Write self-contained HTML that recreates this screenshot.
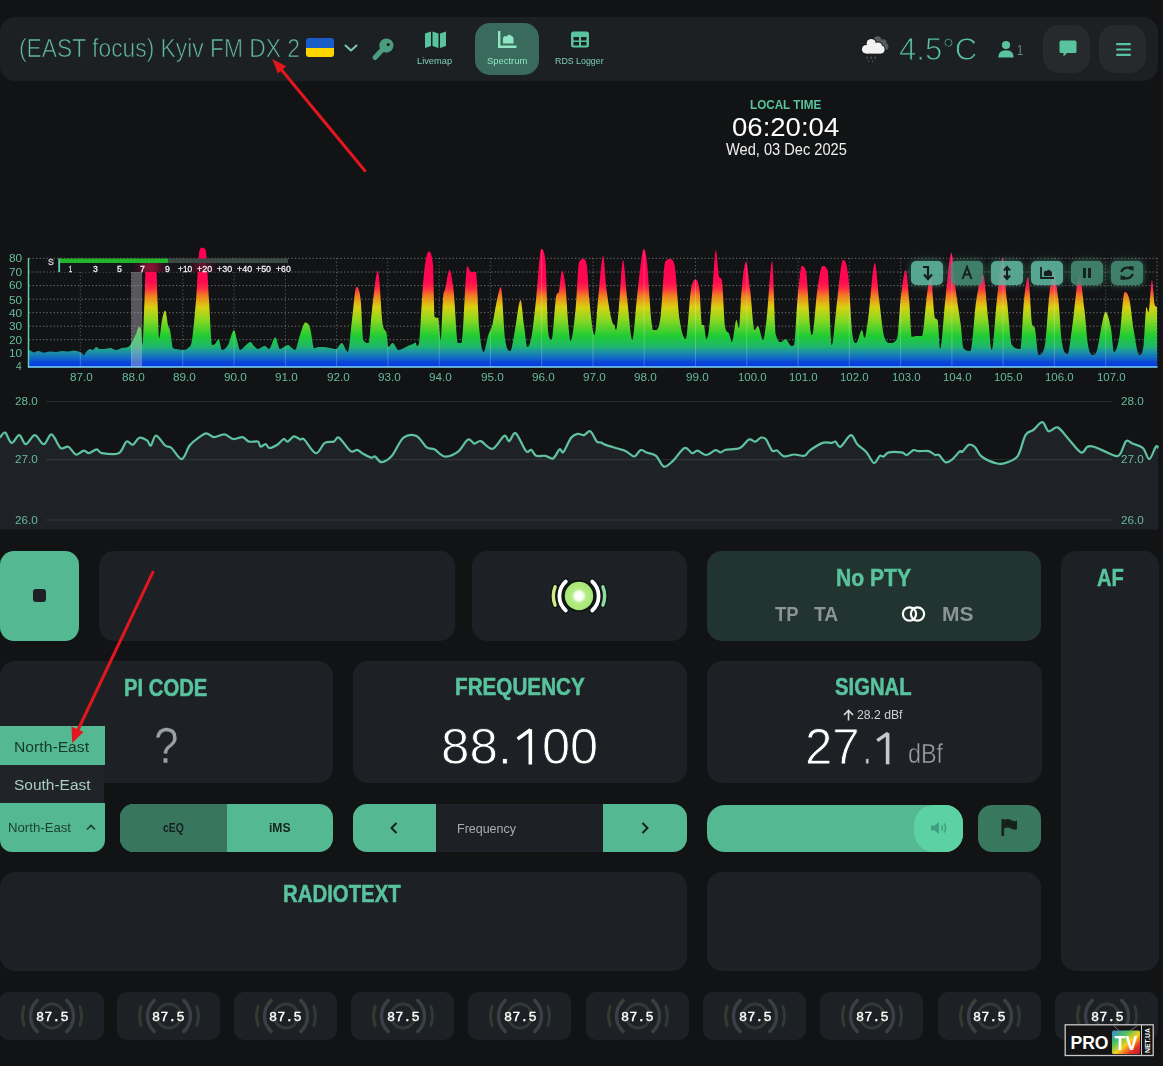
<!DOCTYPE html>
<html><head><meta charset="utf-8"><title>FM-DX Webserver</title>
<style>
html,body{margin:0;padding:0}
body{width:1163px;height:1066px;overflow:hidden;position:relative;background:#121315;font-family:"Liberation Sans",sans-serif}
.panel{position:absolute}
.t{position:absolute;white-space:nowrap;line-height:1;transform-origin:0 0;display:block}
.ic{position:absolute;overflow:visible}
</style></head><body>
<div class="panel" style="left:0;top:17px;width:1158px;height:64px;border-radius:15px;background:#1d2023"></div>
<span class="t" id="t0" style="left:18.9px;top:35.5px;font-size:25.7px;color:#62bb9c;font-weight:400;font-family:'Liberation Sans', sans-serif;transform:scaleX(0.8882);-webkit-text-stroke:0.7px #1d2023;">(EAST focus) Kyiv FM DX 2</span>
<div style="position:absolute;left:306px;top:38px;width:28px;height:19px;border-radius:3px;overflow:hidden"><div style="height:50%;background:#1a5dc8"></div><div style="height:50%;background:#ffd500"></div></div>
<svg class="ic" style="left:343px;top:42px" width="16" height="12" viewBox="0 0 16 12"><path d="M2.5 3.5 L8 8.5 L13.5 3.5" fill="none" stroke="#7cc9ae" stroke-width="2" stroke-linecap="round" stroke-linejoin="round"/></svg>
<svg class="ic" style="left:371px;top:38px" width="24" height="24" viewBox="0 0 24 24"><circle cx="15.4" cy="7.6" r="7.1" fill="#4c9c80"/><circle cx="17.2" cy="6.6" r="1.6" fill="#1d2023"/><path d="M11.5 11.5 L4 19.5" stroke="#4c9c80" stroke-width="5" stroke-linecap="round"/></svg>
<svg class="ic" style="left:425px;top:31px" width="21" height="17" viewBox="0 0 21 17"><path d="M0 2.5 L6 0.5 L6 15 L0 17 Z M7.5 0.5 L13.5 2.5 L13.5 17 L7.5 15 Z M15 2.5 L21 0.5 L21 15 L15 17 Z" fill="#58c39c"/></svg>
<span class="t" id="t1" style="left:417.4px;top:55.6px;font-size:9.8px;color:#7dcfb0;font-weight:400;font-family:'Liberation Sans', sans-serif;transform:scaleX(0.9473);">Livemap</span>
<div style="position:absolute;left:475px;top:23px;width:64px;height:52px;border-radius:15px;background:#3a6a5c"></div>
<svg class="ic" style="left:498px;top:31px" width="19" height="17" viewBox="0 0 19 17"><path d="M1.2 0 L1.2 15.8 L18.5 15.8" fill="none" stroke="#8ee6c4" stroke-width="2.4"/><path d="M5 12.5 L5 7 Q6 4 8.5 5.5 Q10.5 2.5 13 4.5 Q15 5 15.5 7.5 L15.5 12.5 Z" fill="#8ee6c4"/></svg>
<span class="t" id="t2" style="left:487.0px;top:55.6px;font-size:9.8px;color:#8ee6c4;font-weight:400;font-family:'Liberation Sans', sans-serif;transform:scaleX(0.9602);">Spectrum</span>
<svg class="ic" style="left:571px;top:31px" width="18" height="17" viewBox="0 0 18 17"><rect x="0" y="0.5" width="18" height="16" rx="2.5" fill="#58c39c"/><rect x="2.5" y="6" width="5.5" height="3.5" fill="#1d2023"/><rect x="10" y="6" width="5.5" height="3.5" fill="#1d2023"/><rect x="2.5" y="11" width="5.5" height="3.5" fill="#1d2023"/><rect x="10" y="11" width="5.5" height="3.5" fill="#1d2023"/></svg>
<span class="t" id="t3" style="left:554.7px;top:55.6px;font-size:9.8px;color:#7dcfb0;font-weight:400;font-family:'Liberation Sans', sans-serif;transform:scaleX(0.9021);">RDS Logger</span>
<svg class="ic" style="left:850px;top:28px" width="50" height="40" viewBox="0 0 50 40"><g fill="#5a5a5a"><circle cx="27.5" cy="12" r="3.8"/><circle cx="33" cy="14.8" r="3.6"/><circle cx="35.3" cy="18.8" r="3.2"/><rect x="26" y="14" width="9" height="8"/></g><g fill="none" stroke="#141618" stroke-width="2.2"><circle cx="16.2" cy="21.3" r="4.3"/><circle cx="21.2" cy="15.6" r="4.6"/><circle cx="28" cy="18.6" r="4"/><circle cx="30.6" cy="21.6" r="4"/></g><g fill="#f2f2f2"><circle cx="16.2" cy="21.3" r="4.3"/><circle cx="21.2" cy="15.6" r="4.6"/><circle cx="28" cy="18.6" r="4"/><circle cx="30.6" cy="21.6" r="4"/><rect x="16.2" y="19" width="14.4" height="6.6"/></g><path d="M17.5 28.5 L16.8 31 M21.5 28.5 L20.8 31 M25.5 28.5 L24.8 31 M19 32.5 L18.5 34 M23 32.5 L22.5 34" stroke="#4a4e52" stroke-width="1.2"/></svg>
<span class="t" id="t4" style="left:898.7px;top:33.0px;font-size:32px;color:#58c39c;font-weight:400;font-family:'Liberation Sans', sans-serif;transform:scaleX(0.9750);-webkit-text-stroke:1.0px #1d2023;">4.5°C</span>
<svg class="ic" style="left:997px;top:39px" width="20" height="19" viewBox="0 0 20 19"><circle cx="9" cy="6" r="4.1" fill="#58c39c"/><path d="M1.3 18.5 Q1.3 11.3 9 11.3 Q16.7 11.3 16.7 18.5 Z" fill="#58c39c"/></svg>
<span class="t" id="t5" style="left:1017.2px;top:42.9px;font-size:14.5px;color:#78b09b;font-weight:400;font-family:'Liberation Sans', sans-serif;transform:scaleX(0.7571);-webkit-text-stroke:0.3px #1d2023;">1</span>
<div style="position:absolute;left:1043px;top:25px;width:47px;height:48px;border-radius:16px;background:#262a2d"></div>
<svg class="ic" style="left:1059px;top:40px" width="18" height="18" viewBox="0 0 18 18"><path d="M2 0.5 H16 Q17.5 0.5 17.5 2 V11.5 Q17.5 13 16 13 H8 L4.5 16.5 V13 H2 Q0.5 13 0.5 11.5 V2 Q0.5 0.5 2 0.5 Z" fill="#58c39c"/></svg>
<div style="position:absolute;left:1099px;top:25px;width:47px;height:48px;border-radius:16px;background:#262a2d"></div>
<svg class="ic" style="left:1115.5px;top:43px" width="15" height="13" viewBox="0 0 15 13"><rect x="0" y="0" width="15" height="2.2" rx="1" fill="#58c39c"/><rect x="0" y="5.4" width="15" height="2.2" rx="1" fill="#58c39c"/><rect x="0" y="10.8" width="15" height="2.2" rx="1" fill="#58c39c"/></svg>
<span class="t" id="t6" style="left:750.0px;top:98.4px;font-size:13.4px;color:#58c39c;font-weight:700;font-family:'Liberation Sans', sans-serif;transform:scaleX(0.8731);">LOCAL TIME</span>
<span class="t" id="t7" style="left:731.9px;top:114.9px;font-size:25.8px;color:#ffffff;font-weight:400;font-family:'Liberation Sans', sans-serif;transform:scaleX(1.0679);">06:20:04</span>
<span class="t" id="t8" style="left:726.0px;top:142.4px;font-size:16.8px;color:#f0f0f0;font-weight:400;font-family:'Liberation Sans', sans-serif;transform:scaleX(0.8709);">Wed, 03 Dec 2025</span>
<svg class="ic" style="left:0;top:240px" width="1163" height="150" viewBox="0 240 1163 150"><defs><linearGradient id="sg" gradientUnits="userSpaceOnUse" x1="0" y1="367" x2="0" y2="250"><stop offset="0" stop-color="#0838e8"/><stop offset="0.043" stop-color="#0a48d8"/><stop offset="0.085" stop-color="#1470c0"/><stop offset="0.137" stop-color="#1c98a0"/><stop offset="0.179" stop-color="#20b868"/><stop offset="0.265" stop-color="#20cc34"/><stop offset="0.41" stop-color="#90d820"/><stop offset="0.513" stop-color="#d8d010"/><stop offset="0.607" stop-color="#f08020"/><stop offset="0.667" stop-color="#ff3040"/><stop offset="0.726" stop-color="#ff0a50"/><stop offset="1" stop-color="#ff0050"/></linearGradient><clipPath id="rowclip"><rect x="59" y="263" width="229" height="9"/></clipPath><filter id="blr" x="-50%" y="-50%" width="200%" height="200%"><feGaussianBlur stdDeviation="6"/></filter><filter id="glow" x="-50%" y="-50%" width="200%" height="200%"><feGaussianBlur stdDeviation="3"/></filter></defs><line x1="29" y1="258.3" x2="1157" y2="258.3" stroke="rgba(210,210,210,0.5)" stroke-width="1" stroke-dasharray="1.3 2.2"/><line x1="29" y1="272.0" x2="1157" y2="272.0" stroke="rgba(210,210,210,0.5)" stroke-width="1" stroke-dasharray="1.3 2.2"/><line x1="29" y1="285.6" x2="1157" y2="285.6" stroke="rgba(210,210,210,0.5)" stroke-width="1" stroke-dasharray="1.3 2.2"/><line x1="29" y1="299.2" x2="1157" y2="299.2" stroke="rgba(210,210,210,0.5)" stroke-width="1" stroke-dasharray="1.3 2.2"/><line x1="29" y1="312.7" x2="1157" y2="312.7" stroke="rgba(210,210,210,0.5)" stroke-width="1" stroke-dasharray="1.3 2.2"/><line x1="29" y1="326.2" x2="1157" y2="326.2" stroke="rgba(210,210,210,0.5)" stroke-width="1" stroke-dasharray="1.3 2.2"/><line x1="29" y1="339.7" x2="1157" y2="339.7" stroke="rgba(210,210,210,0.5)" stroke-width="1" stroke-dasharray="1.3 2.2"/><line x1="29" y1="353.2" x2="1157" y2="353.2" stroke="rgba(210,210,210,0.5)" stroke-width="1" stroke-dasharray="1.3 2.2"/><line x1="80.3" y1="258" x2="80.3" y2="367" stroke="rgba(210,210,210,0.35)" stroke-width="1" stroke-dasharray="1.3 2.2"/><line x1="131.5" y1="258" x2="131.5" y2="367" stroke="rgba(210,210,210,0.35)" stroke-width="1" stroke-dasharray="1.3 2.2"/><line x1="182.8" y1="258" x2="182.8" y2="367" stroke="rgba(210,210,210,0.35)" stroke-width="1" stroke-dasharray="1.3 2.2"/><line x1="234.1" y1="258" x2="234.1" y2="367" stroke="rgba(210,210,210,0.35)" stroke-width="1" stroke-dasharray="1.3 2.2"/><line x1="285.4" y1="258" x2="285.4" y2="367" stroke="rgba(210,210,210,0.35)" stroke-width="1" stroke-dasharray="1.3 2.2"/><line x1="336.6" y1="258" x2="336.6" y2="367" stroke="rgba(210,210,210,0.35)" stroke-width="1" stroke-dasharray="1.3 2.2"/><line x1="387.9" y1="258" x2="387.9" y2="367" stroke="rgba(210,210,210,0.35)" stroke-width="1" stroke-dasharray="1.3 2.2"/><line x1="439.2" y1="258" x2="439.2" y2="367" stroke="rgba(210,210,210,0.35)" stroke-width="1" stroke-dasharray="1.3 2.2"/><line x1="490.4" y1="258" x2="490.4" y2="367" stroke="rgba(210,210,210,0.35)" stroke-width="1" stroke-dasharray="1.3 2.2"/><line x1="541.7" y1="258" x2="541.7" y2="367" stroke="rgba(210,210,210,0.35)" stroke-width="1" stroke-dasharray="1.3 2.2"/><line x1="593.0" y1="258" x2="593.0" y2="367" stroke="rgba(210,210,210,0.35)" stroke-width="1" stroke-dasharray="1.3 2.2"/><line x1="644.2" y1="258" x2="644.2" y2="367" stroke="rgba(210,210,210,0.35)" stroke-width="1" stroke-dasharray="1.3 2.2"/><line x1="695.5" y1="258" x2="695.5" y2="367" stroke="rgba(210,210,210,0.35)" stroke-width="1" stroke-dasharray="1.3 2.2"/><line x1="746.8" y1="258" x2="746.8" y2="367" stroke="rgba(210,210,210,0.35)" stroke-width="1" stroke-dasharray="1.3 2.2"/><line x1="798.1" y1="258" x2="798.1" y2="367" stroke="rgba(210,210,210,0.35)" stroke-width="1" stroke-dasharray="1.3 2.2"/><line x1="849.3" y1="258" x2="849.3" y2="367" stroke="rgba(210,210,210,0.35)" stroke-width="1" stroke-dasharray="1.3 2.2"/><line x1="900.6" y1="258" x2="900.6" y2="367" stroke="rgba(210,210,210,0.35)" stroke-width="1" stroke-dasharray="1.3 2.2"/><line x1="951.9" y1="258" x2="951.9" y2="367" stroke="rgba(210,210,210,0.35)" stroke-width="1" stroke-dasharray="1.3 2.2"/><line x1="1003.1" y1="258" x2="1003.1" y2="367" stroke="rgba(210,210,210,0.35)" stroke-width="1" stroke-dasharray="1.3 2.2"/><line x1="1054.4" y1="258" x2="1054.4" y2="367" stroke="rgba(210,210,210,0.35)" stroke-width="1" stroke-dasharray="1.3 2.2"/><line x1="1105.7" y1="258" x2="1105.7" y2="367" stroke="rgba(210,210,210,0.35)" stroke-width="1" stroke-dasharray="1.3 2.2"/><line x1="1157" y1="258" x2="1157" y2="367" stroke="rgba(210,210,210,0.45)" stroke-width="1" stroke-dasharray="1.3 2.2"/><path d="M29.0 350.0 C29.7 350.3 30.3 350.7 31.0 351.0 C32.0 351.5 33.0 352.5 34.0 352.5 C35.3 352.5 36.7 351.0 38.0 351.0 C40.0 351.0 42.0 352.7 44.0 352.7 C46.0 352.7 48.0 351.5 50.0 351.5 C52.0 351.5 54.0 352.0 56.0 352.0 C58.0 352.0 60.0 351.0 62.0 351.0 C64.0 351.0 66.0 351.5 68.0 351.5 C70.0 351.5 72.0 350.5 74.0 350.5 C76.0 350.5 78.0 351.0 80.0 352.0 C81.3 352.7 82.7 355.0 84.0 355.0 C85.0 355.0 86.0 352.0 87.0 351.0 C88.0 350.0 89.0 349.0 90.0 349.0 C91.0 349.0 92.0 350.0 93.0 350.0 C94.0 350.0 95.0 347.0 96.0 347.0 C97.3 347.0 98.7 349.0 100.0 349.0 C101.3 349.0 102.7 349.0 104.0 349.0 C106.0 349.0 108.0 348.0 110.0 348.0 C112.0 348.0 114.0 350.0 116.0 350.0 C118.0 350.0 120.0 348.4 122.0 348.0 C124.0 347.6 126.0 347.9 128.0 347.0 C129.0 346.5 130.0 345.5 131.0 344.0 C131.7 343.0 132.3 341.3 133.0 340.0 C134.0 338.0 135.0 336.2 136.0 334.0 C137.0 331.8 138.0 327.0 139.0 327.0 C139.7 327.0 140.3 327.0 141.0 329.0 C141.5 330.5 142.0 345.0 142.5 345.0 C143.2 345.0 143.8 315.9 144.5 300.0 C145.0 288.0 145.5 262.0 146.0 262.0 C149.3 262.0 152.7 262.0 156.0 262.0 C156.5 262.0 157.0 288.1 157.5 300.0 C158.1 313.5 158.6 338.0 159.2 338.0 C160.1 338.0 161.1 324.3 162.0 320.0 C163.1 314.9 164.2 310.5 165.3 310.5 C166.2 310.5 167.1 321.5 168.0 325.0 C168.7 327.6 169.3 327.2 170.0 330.0 C171.0 334.2 172.0 347.0 173.0 348.0 C174.0 349.0 175.0 348.9 176.0 349.0 C178.0 349.2 180.0 350.0 182.0 350.0 C184.0 350.0 186.0 350.0 188.0 348.0 C189.3 346.7 190.7 347.9 192.0 340.0 C193.3 332.1 194.7 315.9 196.0 300.0 C197.2 285.7 198.4 253.2 199.6 250.0 C200.5 247.7 201.3 247.7 202.2 247.7 C203.4 247.7 204.5 247.7 205.7 250.0 C206.8 252.2 207.9 283.4 209.0 300.0 C210.0 315.1 211.0 345.0 212.0 345.0 C213.0 345.0 214.0 344.9 215.0 344.0 C216.2 342.9 217.4 338.9 218.6 338.9 C219.7 338.9 220.9 350.0 222.0 350.0 C224.0 350.0 226.0 348.3 228.0 345.0 C230.0 341.7 232.0 330.3 234.0 330.3 C235.0 330.3 236.0 336.7 237.0 340.0 C238.0 343.3 239.0 350.0 240.0 350.0 C241.7 350.0 243.3 347.3 245.0 346.0 C246.8 344.6 248.6 342.0 250.4 342.0 C251.6 342.0 252.8 344.9 254.0 346.0 C255.3 347.2 256.7 349.0 258.0 349.0 C259.3 349.0 260.7 347.6 262.0 347.0 C263.0 346.6 264.0 346.0 265.0 346.0 C266.3 346.0 267.7 349.0 269.0 349.0 C271.1 349.0 273.2 337.2 275.3 337.2 C276.9 337.2 278.4 349.0 280.0 349.0 C281.3 349.0 282.7 347.7 284.0 347.0 C285.3 346.3 286.7 345.0 288.0 345.0 C289.3 345.0 290.7 347.1 292.0 348.0 C293.0 348.7 294.0 350.0 295.0 350.0 C296.7 350.0 298.3 339.4 300.0 335.0 C301.8 330.2 303.6 322.5 305.4 322.5 C306.9 322.5 308.5 323.2 310.0 327.7 C311.4 331.9 312.9 348.3 314.3 348.3 C315.5 348.3 316.8 347.0 318.0 347.0 C319.6 347.0 321.3 347.0 322.9 347.0 C325.3 347.0 327.6 347.6 330.0 348.0 C331.9 348.3 333.9 349.0 335.8 349.0 C337.8 349.0 339.8 343.0 341.8 343.0 C343.8 343.0 345.8 352.0 347.8 352.0 C349.2 352.0 350.6 330.6 352.0 320.0 C353.5 308.9 354.9 287.0 356.4 287.0 C357.8 287.0 359.3 287.0 360.7 300.0 C361.6 307.9 362.4 338.5 363.3 340.0 C365.0 343.0 366.8 343.0 368.5 343.0 C369.7 343.0 370.8 319.4 372.0 310.0 C374.0 294.2 375.9 271.0 377.9 271.0 C379.6 271.0 381.3 318.0 383.0 326.0 C384.2 331.5 385.3 328.6 386.5 333.0 C387.1 335.1 387.6 347.0 388.2 347.0 C389.6 347.0 391.1 343.0 392.5 343.0 C394.5 343.0 396.6 350.0 398.6 350.0 C400.4 350.0 402.2 348.8 404.0 348.0 C405.7 347.3 407.3 346.2 409.0 345.5 C410.3 344.9 411.7 344.6 413.0 344.0 C413.8 343.6 414.7 342.5 415.5 342.5 C416.0 342.5 416.5 346.0 417.0 346.0 C417.7 346.0 418.3 346.0 419.0 343.0 C420.2 337.6 421.4 305.1 422.6 290.0 C423.4 279.9 424.2 270.6 425.0 265.0 C426.2 256.3 427.5 251.5 428.7 251.5 C430.1 251.5 431.6 251.5 433.0 265.0 C433.6 270.3 434.1 316.5 434.7 317.0 C435.8 318.0 437.0 317.7 438.1 318.0 C439.0 318.2 439.8 340.0 440.7 340.0 C441.6 340.0 442.4 302.2 443.3 295.0 C443.9 290.3 444.4 291.8 445.0 290.0 C446.4 285.6 447.9 270.0 449.3 270.0 C450.7 270.0 452.2 277.8 453.6 290.0 C455.0 302.2 456.5 343.0 457.9 343.0 C459.0 343.0 460.2 343.0 461.3 343.0 C463.3 343.0 465.3 266.0 467.3 266.0 C468.5 266.0 469.6 272.0 470.8 272.0 C472.5 272.0 474.2 272.0 475.9 272.0 C477.1 272.0 478.2 317.3 479.4 330.0 C480.8 345.5 482.3 352.0 483.7 352.0 C485.1 352.0 486.6 340.5 488.0 336.0 C489.4 331.5 490.9 330.7 492.3 325.0 C493.5 320.1 494.8 310.6 496.0 305.0 C497.6 297.6 499.3 287.0 500.9 287.0 C502.3 287.0 503.8 330.7 505.2 340.0 C506.9 351.0 508.6 351.0 510.3 351.0 C511.9 351.0 513.4 337.7 515.0 330.0 C516.9 320.8 518.7 300.0 520.6 300.0 C521.7 300.0 522.9 317.3 524.0 325.0 C525.2 333.0 526.3 347.0 527.5 347.0 C528.9 347.0 530.4 343.0 531.8 335.0 C533.2 327.2 534.6 312.6 536.0 300.0 C537.8 284.1 539.5 249.0 541.3 249.0 C542.7 249.0 544.2 249.0 545.6 262.0 C546.5 269.9 547.3 325.9 548.2 332.0 C549.3 340.0 550.5 340.0 551.6 340.0 C553.3 340.0 555.0 296.3 556.7 294.0 C557.3 293.2 557.9 293.6 558.5 293.0 C559.6 291.9 560.8 271.0 561.9 271.0 C563.0 271.0 564.2 275.4 565.3 285.0 C566.5 294.9 567.6 318.7 568.8 330.0 C569.4 335.5 569.9 341.0 570.5 341.0 C572.2 341.0 574.0 325.2 575.7 308.0 C576.8 296.7 578.0 264.4 579.1 262.0 C580.5 259.0 582.0 259.0 583.4 259.0 C584.5 259.0 585.7 259.0 586.8 265.0 C587.7 269.6 588.5 291.2 589.4 300.0 C591.1 317.5 592.9 335.0 594.6 335.0 C595.7 335.0 596.9 310.6 598.0 300.0 C599.7 283.7 601.5 256.0 603.2 256.0 C604.3 256.0 605.5 281.2 606.6 290.0 C608.6 305.5 610.6 317.4 612.6 323.0 C613.2 324.7 613.8 323.9 614.4 325.0 C614.9 326.0 615.5 330.0 616.0 330.0 C616.9 330.0 617.8 318.6 618.7 310.0 C620.1 296.4 621.6 260.0 623.0 260.0 C624.4 260.0 625.9 287.7 627.3 300.0 C629.0 314.6 630.7 340.0 632.4 340.0 C633.8 340.0 635.3 313.2 636.7 300.0 C637.8 289.9 638.9 278.2 640.0 270.0 C641.2 261.0 642.4 249.0 643.6 249.0 C644.7 249.0 645.9 252.2 647.0 262.0 C648.4 274.4 649.9 306.1 651.3 320.0 C651.9 325.5 652.4 330.0 653.0 330.0 C654.2 330.0 655.3 330.0 656.5 330.0 C657.9 330.0 659.4 326.3 660.8 315.0 C662.2 303.7 663.7 264.5 665.1 262.0 C666.8 259.0 668.5 259.0 670.2 259.0 C671.6 259.0 673.1 259.0 674.5 265.0 C676.2 272.3 678.0 308.1 679.7 320.0 C681.7 333.7 683.7 339.0 685.7 339.0 C687.4 339.0 689.2 300.3 690.9 290.0 C692.3 281.5 693.8 279.6 695.2 279.6 C696.6 279.6 698.1 279.6 699.5 290.0 C700.3 296.0 701.2 325.0 702.0 325.0 C702.6 325.0 703.2 325.0 703.8 325.0 C704.6 325.0 705.5 339.0 706.3 339.0 C707.2 339.0 708.0 336.5 708.9 330.0 C710.1 321.3 711.2 303.5 712.4 290.0 C713.5 276.9 714.7 250.0 715.8 250.0 C716.9 250.0 718.1 275.0 719.2 277.0 C720.1 278.6 720.9 277.4 721.8 280.0 C723.0 283.4 724.1 323.0 725.3 328.0 C726.4 332.8 727.6 331.7 728.7 333.0 C729.8 334.3 731.0 342.0 732.1 342.0 C733.5 342.0 735.0 320.0 736.4 320.0 C737.3 320.0 738.1 328.0 739.0 328.0 C739.9 328.0 740.7 299.2 741.6 290.0 C743.0 274.9 744.5 262.0 745.9 262.0 C747.3 262.0 748.8 278.7 750.2 290.0 C751.6 301.3 753.1 330.0 754.5 330.0 C755.6 330.0 756.8 326.0 757.9 326.0 C759.6 326.0 761.4 340.0 763.1 340.0 C764.2 340.0 765.4 329.2 766.5 320.0 C768.4 304.6 770.3 261.0 772.2 261.0 C773.5 261.0 774.7 329.8 776.0 335.0 C777.7 342.0 779.4 342.0 781.1 342.0 C782.5 342.0 784.0 339.0 785.4 339.0 C787.4 339.0 789.5 346.0 791.5 346.0 C792.3 346.0 793.2 346.0 794.0 345.0 C795.2 343.6 796.3 312.1 797.5 300.0 C798.9 285.1 800.4 266.0 801.8 266.0 C803.2 266.0 804.7 266.0 806.1 272.0 C807.5 278.0 809.0 318.2 810.4 330.0 C811.0 334.7 811.5 335.0 812.1 335.0 C813.8 335.0 815.6 301.6 817.3 290.0 C819.0 278.6 820.7 266.0 822.4 266.0 C824.1 266.0 825.9 266.0 827.6 270.0 C829.0 273.3 830.5 345.0 831.9 345.0 C833.3 345.0 834.8 321.1 836.2 310.0 C838.5 292.4 840.7 260.0 843.0 260.0 C844.7 260.0 846.5 260.4 848.2 275.0 C849.6 287.1 851.1 325.2 852.5 335.0 C853.7 343.0 854.8 343.0 856.0 343.0 C858.0 343.0 860.0 330.0 862.0 330.0 C862.8 330.0 863.7 338.0 864.5 338.0 C865.7 338.0 866.8 327.8 868.0 320.0 C870.3 304.6 872.6 263.0 874.9 263.0 C876.3 263.0 877.8 288.6 879.2 300.0 C880.9 313.5 882.6 331.9 884.3 337.0 C886.3 343.0 888.3 343.0 890.3 343.0 C892.6 343.0 894.9 343.0 897.2 338.0 C898.3 335.5 899.5 309.6 900.6 300.0 C902.3 285.3 904.1 270.0 905.8 270.0 C906.9 270.0 908.1 286.9 909.2 300.0 C910.1 310.0 910.9 337.0 911.8 337.0 C913.2 337.0 914.7 336.0 916.1 336.0 C918.1 336.0 920.1 336.0 922.1 336.0 C923.5 336.0 925.0 310.2 926.4 300.0 C927.8 289.8 929.3 275.0 930.7 275.0 C932.1 275.0 933.6 315.8 935.0 318.0 C935.9 319.3 936.7 318.5 937.6 320.0 C938.5 321.5 939.3 349.0 940.2 349.0 C941.9 349.0 943.6 314.7 945.3 300.0 C947.3 282.4 949.4 253.0 951.4 253.0 C952.8 253.0 954.3 278.9 955.7 290.0 C957.4 303.1 959.1 311.6 960.8 325.0 C961.7 331.8 962.5 346.9 963.4 348.0 C965.7 351.0 968.0 351.0 970.3 351.0 C972.3 351.0 974.3 312.1 976.3 300.0 C978.6 286.1 980.9 275.0 983.2 275.0 C984.9 275.0 986.6 305.2 988.3 320.0 C989.5 330.1 990.6 350.0 991.8 350.0 C993.5 350.0 995.2 314.4 996.9 300.0 C998.9 283.4 1000.8 258.0 1002.8 258.0 C1004.2 258.0 1005.6 286.7 1007.0 300.0 C1008.7 315.8 1010.3 342.6 1012.0 345.0 C1014.8 349.0 1017.6 349.0 1020.4 349.0 C1021.6 349.0 1022.8 311.5 1024.0 300.0 C1025.4 286.6 1026.8 277.0 1028.2 277.0 C1029.6 277.0 1031.0 321.6 1032.4 325.0 C1033.1 326.7 1033.8 326.0 1034.5 327.0 C1035.9 329.1 1037.3 355.0 1038.7 355.0 C1040.8 355.0 1042.9 355.0 1045.0 345.0 C1046.4 338.2 1047.9 307.3 1049.3 295.0 C1050.7 283.0 1052.1 272.0 1053.5 272.0 C1055.1 272.0 1056.8 285.6 1058.4 300.0 C1059.6 310.6 1060.8 335.9 1062.0 343.0 C1063.9 354.0 1065.7 354.0 1067.6 354.0 C1069.0 354.0 1070.4 338.9 1071.8 330.0 C1074.4 313.7 1076.9 276.0 1079.5 276.0 C1081.2 276.0 1082.8 296.0 1084.5 310.0 C1085.7 319.8 1086.8 338.0 1088.0 345.0 C1089.7 355.0 1091.3 355.0 1093.0 355.0 C1094.4 355.0 1095.7 354.4 1097.1 350.0 C1098.1 346.9 1099.0 339.5 1100.0 335.0 C1101.9 326.3 1103.7 312.0 1105.6 312.0 C1107.5 312.0 1109.3 319.7 1111.2 330.0 C1112.1 335.2 1113.1 352.0 1114.0 352.0 C1115.9 352.0 1117.8 346.2 1119.7 335.0 C1121.3 325.4 1123.0 292.0 1124.6 292.0 C1126.2 292.0 1127.9 292.8 1129.5 300.0 C1130.9 306.1 1132.3 321.9 1133.7 330.0 C1135.6 341.0 1137.5 355.0 1139.4 355.0 C1140.8 355.0 1142.2 355.0 1143.6 345.0 C1144.5 338.3 1145.5 307.0 1146.4 307.0 C1147.1 307.0 1147.8 312.0 1148.5 312.0 C1149.7 312.0 1150.8 280.0 1152.0 280.0 C1152.9 280.0 1153.9 302.5 1154.8 305.0 C1155.5 307.0 1156.3 306.6 1157.0 307.0 L1157 367 L29 367 Z" fill="url(#sg)"/><clipPath id="specclip"><path d="M29.0 350.0 C29.7 350.3 30.3 350.7 31.0 351.0 C32.0 351.5 33.0 352.5 34.0 352.5 C35.3 352.5 36.7 351.0 38.0 351.0 C40.0 351.0 42.0 352.7 44.0 352.7 C46.0 352.7 48.0 351.5 50.0 351.5 C52.0 351.5 54.0 352.0 56.0 352.0 C58.0 352.0 60.0 351.0 62.0 351.0 C64.0 351.0 66.0 351.5 68.0 351.5 C70.0 351.5 72.0 350.5 74.0 350.5 C76.0 350.5 78.0 351.0 80.0 352.0 C81.3 352.7 82.7 355.0 84.0 355.0 C85.0 355.0 86.0 352.0 87.0 351.0 C88.0 350.0 89.0 349.0 90.0 349.0 C91.0 349.0 92.0 350.0 93.0 350.0 C94.0 350.0 95.0 347.0 96.0 347.0 C97.3 347.0 98.7 349.0 100.0 349.0 C101.3 349.0 102.7 349.0 104.0 349.0 C106.0 349.0 108.0 348.0 110.0 348.0 C112.0 348.0 114.0 350.0 116.0 350.0 C118.0 350.0 120.0 348.4 122.0 348.0 C124.0 347.6 126.0 347.9 128.0 347.0 C129.0 346.5 130.0 345.5 131.0 344.0 C131.7 343.0 132.3 341.3 133.0 340.0 C134.0 338.0 135.0 336.2 136.0 334.0 C137.0 331.8 138.0 327.0 139.0 327.0 C139.7 327.0 140.3 327.0 141.0 329.0 C141.5 330.5 142.0 345.0 142.5 345.0 C143.2 345.0 143.8 315.9 144.5 300.0 C145.0 288.0 145.5 262.0 146.0 262.0 C149.3 262.0 152.7 262.0 156.0 262.0 C156.5 262.0 157.0 288.1 157.5 300.0 C158.1 313.5 158.6 338.0 159.2 338.0 C160.1 338.0 161.1 324.3 162.0 320.0 C163.1 314.9 164.2 310.5 165.3 310.5 C166.2 310.5 167.1 321.5 168.0 325.0 C168.7 327.6 169.3 327.2 170.0 330.0 C171.0 334.2 172.0 347.0 173.0 348.0 C174.0 349.0 175.0 348.9 176.0 349.0 C178.0 349.2 180.0 350.0 182.0 350.0 C184.0 350.0 186.0 350.0 188.0 348.0 C189.3 346.7 190.7 347.9 192.0 340.0 C193.3 332.1 194.7 315.9 196.0 300.0 C197.2 285.7 198.4 253.2 199.6 250.0 C200.5 247.7 201.3 247.7 202.2 247.7 C203.4 247.7 204.5 247.7 205.7 250.0 C206.8 252.2 207.9 283.4 209.0 300.0 C210.0 315.1 211.0 345.0 212.0 345.0 C213.0 345.0 214.0 344.9 215.0 344.0 C216.2 342.9 217.4 338.9 218.6 338.9 C219.7 338.9 220.9 350.0 222.0 350.0 C224.0 350.0 226.0 348.3 228.0 345.0 C230.0 341.7 232.0 330.3 234.0 330.3 C235.0 330.3 236.0 336.7 237.0 340.0 C238.0 343.3 239.0 350.0 240.0 350.0 C241.7 350.0 243.3 347.3 245.0 346.0 C246.8 344.6 248.6 342.0 250.4 342.0 C251.6 342.0 252.8 344.9 254.0 346.0 C255.3 347.2 256.7 349.0 258.0 349.0 C259.3 349.0 260.7 347.6 262.0 347.0 C263.0 346.6 264.0 346.0 265.0 346.0 C266.3 346.0 267.7 349.0 269.0 349.0 C271.1 349.0 273.2 337.2 275.3 337.2 C276.9 337.2 278.4 349.0 280.0 349.0 C281.3 349.0 282.7 347.7 284.0 347.0 C285.3 346.3 286.7 345.0 288.0 345.0 C289.3 345.0 290.7 347.1 292.0 348.0 C293.0 348.7 294.0 350.0 295.0 350.0 C296.7 350.0 298.3 339.4 300.0 335.0 C301.8 330.2 303.6 322.5 305.4 322.5 C306.9 322.5 308.5 323.2 310.0 327.7 C311.4 331.9 312.9 348.3 314.3 348.3 C315.5 348.3 316.8 347.0 318.0 347.0 C319.6 347.0 321.3 347.0 322.9 347.0 C325.3 347.0 327.6 347.6 330.0 348.0 C331.9 348.3 333.9 349.0 335.8 349.0 C337.8 349.0 339.8 343.0 341.8 343.0 C343.8 343.0 345.8 352.0 347.8 352.0 C349.2 352.0 350.6 330.6 352.0 320.0 C353.5 308.9 354.9 287.0 356.4 287.0 C357.8 287.0 359.3 287.0 360.7 300.0 C361.6 307.9 362.4 338.5 363.3 340.0 C365.0 343.0 366.8 343.0 368.5 343.0 C369.7 343.0 370.8 319.4 372.0 310.0 C374.0 294.2 375.9 271.0 377.9 271.0 C379.6 271.0 381.3 318.0 383.0 326.0 C384.2 331.5 385.3 328.6 386.5 333.0 C387.1 335.1 387.6 347.0 388.2 347.0 C389.6 347.0 391.1 343.0 392.5 343.0 C394.5 343.0 396.6 350.0 398.6 350.0 C400.4 350.0 402.2 348.8 404.0 348.0 C405.7 347.3 407.3 346.2 409.0 345.5 C410.3 344.9 411.7 344.6 413.0 344.0 C413.8 343.6 414.7 342.5 415.5 342.5 C416.0 342.5 416.5 346.0 417.0 346.0 C417.7 346.0 418.3 346.0 419.0 343.0 C420.2 337.6 421.4 305.1 422.6 290.0 C423.4 279.9 424.2 270.6 425.0 265.0 C426.2 256.3 427.5 251.5 428.7 251.5 C430.1 251.5 431.6 251.5 433.0 265.0 C433.6 270.3 434.1 316.5 434.7 317.0 C435.8 318.0 437.0 317.7 438.1 318.0 C439.0 318.2 439.8 340.0 440.7 340.0 C441.6 340.0 442.4 302.2 443.3 295.0 C443.9 290.3 444.4 291.8 445.0 290.0 C446.4 285.6 447.9 270.0 449.3 270.0 C450.7 270.0 452.2 277.8 453.6 290.0 C455.0 302.2 456.5 343.0 457.9 343.0 C459.0 343.0 460.2 343.0 461.3 343.0 C463.3 343.0 465.3 266.0 467.3 266.0 C468.5 266.0 469.6 272.0 470.8 272.0 C472.5 272.0 474.2 272.0 475.9 272.0 C477.1 272.0 478.2 317.3 479.4 330.0 C480.8 345.5 482.3 352.0 483.7 352.0 C485.1 352.0 486.6 340.5 488.0 336.0 C489.4 331.5 490.9 330.7 492.3 325.0 C493.5 320.1 494.8 310.6 496.0 305.0 C497.6 297.6 499.3 287.0 500.9 287.0 C502.3 287.0 503.8 330.7 505.2 340.0 C506.9 351.0 508.6 351.0 510.3 351.0 C511.9 351.0 513.4 337.7 515.0 330.0 C516.9 320.8 518.7 300.0 520.6 300.0 C521.7 300.0 522.9 317.3 524.0 325.0 C525.2 333.0 526.3 347.0 527.5 347.0 C528.9 347.0 530.4 343.0 531.8 335.0 C533.2 327.2 534.6 312.6 536.0 300.0 C537.8 284.1 539.5 249.0 541.3 249.0 C542.7 249.0 544.2 249.0 545.6 262.0 C546.5 269.9 547.3 325.9 548.2 332.0 C549.3 340.0 550.5 340.0 551.6 340.0 C553.3 340.0 555.0 296.3 556.7 294.0 C557.3 293.2 557.9 293.6 558.5 293.0 C559.6 291.9 560.8 271.0 561.9 271.0 C563.0 271.0 564.2 275.4 565.3 285.0 C566.5 294.9 567.6 318.7 568.8 330.0 C569.4 335.5 569.9 341.0 570.5 341.0 C572.2 341.0 574.0 325.2 575.7 308.0 C576.8 296.7 578.0 264.4 579.1 262.0 C580.5 259.0 582.0 259.0 583.4 259.0 C584.5 259.0 585.7 259.0 586.8 265.0 C587.7 269.6 588.5 291.2 589.4 300.0 C591.1 317.5 592.9 335.0 594.6 335.0 C595.7 335.0 596.9 310.6 598.0 300.0 C599.7 283.7 601.5 256.0 603.2 256.0 C604.3 256.0 605.5 281.2 606.6 290.0 C608.6 305.5 610.6 317.4 612.6 323.0 C613.2 324.7 613.8 323.9 614.4 325.0 C614.9 326.0 615.5 330.0 616.0 330.0 C616.9 330.0 617.8 318.6 618.7 310.0 C620.1 296.4 621.6 260.0 623.0 260.0 C624.4 260.0 625.9 287.7 627.3 300.0 C629.0 314.6 630.7 340.0 632.4 340.0 C633.8 340.0 635.3 313.2 636.7 300.0 C637.8 289.9 638.9 278.2 640.0 270.0 C641.2 261.0 642.4 249.0 643.6 249.0 C644.7 249.0 645.9 252.2 647.0 262.0 C648.4 274.4 649.9 306.1 651.3 320.0 C651.9 325.5 652.4 330.0 653.0 330.0 C654.2 330.0 655.3 330.0 656.5 330.0 C657.9 330.0 659.4 326.3 660.8 315.0 C662.2 303.7 663.7 264.5 665.1 262.0 C666.8 259.0 668.5 259.0 670.2 259.0 C671.6 259.0 673.1 259.0 674.5 265.0 C676.2 272.3 678.0 308.1 679.7 320.0 C681.7 333.7 683.7 339.0 685.7 339.0 C687.4 339.0 689.2 300.3 690.9 290.0 C692.3 281.5 693.8 279.6 695.2 279.6 C696.6 279.6 698.1 279.6 699.5 290.0 C700.3 296.0 701.2 325.0 702.0 325.0 C702.6 325.0 703.2 325.0 703.8 325.0 C704.6 325.0 705.5 339.0 706.3 339.0 C707.2 339.0 708.0 336.5 708.9 330.0 C710.1 321.3 711.2 303.5 712.4 290.0 C713.5 276.9 714.7 250.0 715.8 250.0 C716.9 250.0 718.1 275.0 719.2 277.0 C720.1 278.6 720.9 277.4 721.8 280.0 C723.0 283.4 724.1 323.0 725.3 328.0 C726.4 332.8 727.6 331.7 728.7 333.0 C729.8 334.3 731.0 342.0 732.1 342.0 C733.5 342.0 735.0 320.0 736.4 320.0 C737.3 320.0 738.1 328.0 739.0 328.0 C739.9 328.0 740.7 299.2 741.6 290.0 C743.0 274.9 744.5 262.0 745.9 262.0 C747.3 262.0 748.8 278.7 750.2 290.0 C751.6 301.3 753.1 330.0 754.5 330.0 C755.6 330.0 756.8 326.0 757.9 326.0 C759.6 326.0 761.4 340.0 763.1 340.0 C764.2 340.0 765.4 329.2 766.5 320.0 C768.4 304.6 770.3 261.0 772.2 261.0 C773.5 261.0 774.7 329.8 776.0 335.0 C777.7 342.0 779.4 342.0 781.1 342.0 C782.5 342.0 784.0 339.0 785.4 339.0 C787.4 339.0 789.5 346.0 791.5 346.0 C792.3 346.0 793.2 346.0 794.0 345.0 C795.2 343.6 796.3 312.1 797.5 300.0 C798.9 285.1 800.4 266.0 801.8 266.0 C803.2 266.0 804.7 266.0 806.1 272.0 C807.5 278.0 809.0 318.2 810.4 330.0 C811.0 334.7 811.5 335.0 812.1 335.0 C813.8 335.0 815.6 301.6 817.3 290.0 C819.0 278.6 820.7 266.0 822.4 266.0 C824.1 266.0 825.9 266.0 827.6 270.0 C829.0 273.3 830.5 345.0 831.9 345.0 C833.3 345.0 834.8 321.1 836.2 310.0 C838.5 292.4 840.7 260.0 843.0 260.0 C844.7 260.0 846.5 260.4 848.2 275.0 C849.6 287.1 851.1 325.2 852.5 335.0 C853.7 343.0 854.8 343.0 856.0 343.0 C858.0 343.0 860.0 330.0 862.0 330.0 C862.8 330.0 863.7 338.0 864.5 338.0 C865.7 338.0 866.8 327.8 868.0 320.0 C870.3 304.6 872.6 263.0 874.9 263.0 C876.3 263.0 877.8 288.6 879.2 300.0 C880.9 313.5 882.6 331.9 884.3 337.0 C886.3 343.0 888.3 343.0 890.3 343.0 C892.6 343.0 894.9 343.0 897.2 338.0 C898.3 335.5 899.5 309.6 900.6 300.0 C902.3 285.3 904.1 270.0 905.8 270.0 C906.9 270.0 908.1 286.9 909.2 300.0 C910.1 310.0 910.9 337.0 911.8 337.0 C913.2 337.0 914.7 336.0 916.1 336.0 C918.1 336.0 920.1 336.0 922.1 336.0 C923.5 336.0 925.0 310.2 926.4 300.0 C927.8 289.8 929.3 275.0 930.7 275.0 C932.1 275.0 933.6 315.8 935.0 318.0 C935.9 319.3 936.7 318.5 937.6 320.0 C938.5 321.5 939.3 349.0 940.2 349.0 C941.9 349.0 943.6 314.7 945.3 300.0 C947.3 282.4 949.4 253.0 951.4 253.0 C952.8 253.0 954.3 278.9 955.7 290.0 C957.4 303.1 959.1 311.6 960.8 325.0 C961.7 331.8 962.5 346.9 963.4 348.0 C965.7 351.0 968.0 351.0 970.3 351.0 C972.3 351.0 974.3 312.1 976.3 300.0 C978.6 286.1 980.9 275.0 983.2 275.0 C984.9 275.0 986.6 305.2 988.3 320.0 C989.5 330.1 990.6 350.0 991.8 350.0 C993.5 350.0 995.2 314.4 996.9 300.0 C998.9 283.4 1000.8 258.0 1002.8 258.0 C1004.2 258.0 1005.6 286.7 1007.0 300.0 C1008.7 315.8 1010.3 342.6 1012.0 345.0 C1014.8 349.0 1017.6 349.0 1020.4 349.0 C1021.6 349.0 1022.8 311.5 1024.0 300.0 C1025.4 286.6 1026.8 277.0 1028.2 277.0 C1029.6 277.0 1031.0 321.6 1032.4 325.0 C1033.1 326.7 1033.8 326.0 1034.5 327.0 C1035.9 329.1 1037.3 355.0 1038.7 355.0 C1040.8 355.0 1042.9 355.0 1045.0 345.0 C1046.4 338.2 1047.9 307.3 1049.3 295.0 C1050.7 283.0 1052.1 272.0 1053.5 272.0 C1055.1 272.0 1056.8 285.6 1058.4 300.0 C1059.6 310.6 1060.8 335.9 1062.0 343.0 C1063.9 354.0 1065.7 354.0 1067.6 354.0 C1069.0 354.0 1070.4 338.9 1071.8 330.0 C1074.4 313.7 1076.9 276.0 1079.5 276.0 C1081.2 276.0 1082.8 296.0 1084.5 310.0 C1085.7 319.8 1086.8 338.0 1088.0 345.0 C1089.7 355.0 1091.3 355.0 1093.0 355.0 C1094.4 355.0 1095.7 354.4 1097.1 350.0 C1098.1 346.9 1099.0 339.5 1100.0 335.0 C1101.9 326.3 1103.7 312.0 1105.6 312.0 C1107.5 312.0 1109.3 319.7 1111.2 330.0 C1112.1 335.2 1113.1 352.0 1114.0 352.0 C1115.9 352.0 1117.8 346.2 1119.7 335.0 C1121.3 325.4 1123.0 292.0 1124.6 292.0 C1126.2 292.0 1127.9 292.8 1129.5 300.0 C1130.9 306.1 1132.3 321.9 1133.7 330.0 C1135.6 341.0 1137.5 355.0 1139.4 355.0 C1140.8 355.0 1142.2 355.0 1143.6 345.0 C1144.5 338.3 1145.5 307.0 1146.4 307.0 C1147.1 307.0 1147.8 312.0 1148.5 312.0 C1149.7 312.0 1150.8 280.0 1152.0 280.0 C1152.9 280.0 1153.9 302.5 1154.8 305.0 C1155.5 307.0 1156.3 306.6 1157.0 307.0 L1157 367 L29 367 Z"/></clipPath><g clip-path="url(#specclip)"><line x1="80.3" y1="250" x2="80.3" y2="367" stroke="rgba(255,255,255,0.22)" stroke-width="1"/><line x1="131.5" y1="250" x2="131.5" y2="367" stroke="rgba(255,255,255,0.22)" stroke-width="1"/><line x1="182.8" y1="250" x2="182.8" y2="367" stroke="rgba(255,255,255,0.22)" stroke-width="1"/><line x1="234.1" y1="250" x2="234.1" y2="367" stroke="rgba(255,255,255,0.22)" stroke-width="1"/><line x1="285.4" y1="250" x2="285.4" y2="367" stroke="rgba(255,255,255,0.22)" stroke-width="1"/><line x1="336.6" y1="250" x2="336.6" y2="367" stroke="rgba(255,255,255,0.22)" stroke-width="1"/><line x1="387.9" y1="250" x2="387.9" y2="367" stroke="rgba(255,255,255,0.22)" stroke-width="1"/><line x1="439.2" y1="250" x2="439.2" y2="367" stroke="rgba(255,255,255,0.22)" stroke-width="1"/><line x1="490.4" y1="250" x2="490.4" y2="367" stroke="rgba(255,255,255,0.22)" stroke-width="1"/><line x1="541.7" y1="250" x2="541.7" y2="367" stroke="rgba(255,255,255,0.22)" stroke-width="1"/><line x1="593.0" y1="250" x2="593.0" y2="367" stroke="rgba(255,255,255,0.22)" stroke-width="1"/><line x1="644.2" y1="250" x2="644.2" y2="367" stroke="rgba(255,255,255,0.22)" stroke-width="1"/><line x1="695.5" y1="250" x2="695.5" y2="367" stroke="rgba(255,255,255,0.22)" stroke-width="1"/><line x1="746.8" y1="250" x2="746.8" y2="367" stroke="rgba(255,255,255,0.22)" stroke-width="1"/><line x1="798.1" y1="250" x2="798.1" y2="367" stroke="rgba(255,255,255,0.22)" stroke-width="1"/><line x1="849.3" y1="250" x2="849.3" y2="367" stroke="rgba(255,255,255,0.22)" stroke-width="1"/><line x1="900.6" y1="250" x2="900.6" y2="367" stroke="rgba(255,255,255,0.22)" stroke-width="1"/><line x1="951.9" y1="250" x2="951.9" y2="367" stroke="rgba(255,255,255,0.22)" stroke-width="1"/><line x1="1003.1" y1="250" x2="1003.1" y2="367" stroke="rgba(255,255,255,0.22)" stroke-width="1"/><line x1="1054.4" y1="250" x2="1054.4" y2="367" stroke="rgba(255,255,255,0.22)" stroke-width="1"/><line x1="1105.7" y1="250" x2="1105.7" y2="367" stroke="rgba(255,255,255,0.22)" stroke-width="1"/></g><line x1="28.5" y1="258" x2="28.5" y2="367.5" stroke="#5fd0a8" stroke-width="1.5"/><line x1="28" y1="367" x2="1157.5" y2="367" stroke="#7fd8f0" stroke-width="1.5"/><rect x="131.3" y="272" width="10.8" height="95" fill="rgba(200,200,210,0.38)"/><rect x="59" y="263" width="229" height="9" fill="#151619"/><g clip-path="url(#rowclip)"><g filter="url(#blr)" opacity="0.6"><rect x="142" y="258" width="17" height="20" fill="#ff1050"/><rect x="197" y="258" width="10" height="20" fill="#ff1050"/></g></g><rect x="59" y="258.5" width="109" height="4.5" fill="#22b52c"/><rect x="168" y="258.5" width="120" height="4.5" fill="#3c4a45"/><rect x="58.3" y="258.5" width="1.8" height="13.5" fill="#5fd0a8"/></svg>
<span class="t" id="t9" style="left:47.7px;top:257.0px;font-size:9.5px;color:#dddddd;font-weight:400;font-family:'Liberation Sans', sans-serif;transform:scaleX(0.9167);-webkit-text-stroke:0.3px #dddddd;">S</span>
<span class="t" id="t10" style="left:69.4px;top:263.5px;font-size:9.5px;color:#f0f0f0;font-weight:400;font-family:'Liberation Sans', sans-serif;transform:scaleX(0.5600);-webkit-text-stroke:0.3px #f0f0f0;">1</span>
<span class="t" id="t11" style="left:92.7px;top:263.5px;font-size:9.5px;color:#f0f0f0;font-weight:400;font-family:'Liberation Sans', sans-serif;transform:scaleX(0.9200);-webkit-text-stroke:0.3px #f0f0f0;">3</span>
<span class="t" id="t12" style="left:116.7px;top:263.5px;font-size:9.5px;color:#f0f0f0;font-weight:400;font-family:'Liberation Sans', sans-serif;transform:scaleX(0.9200);-webkit-text-stroke:0.3px #f0f0f0;">5</span>
<span class="t" id="t13" style="left:139.9px;top:263.5px;font-size:9.5px;color:#f0f0f0;font-weight:400;font-family:'Liberation Sans', sans-serif;transform:scaleX(0.9200);-webkit-text-stroke:0.3px #f0f0f0;">7</span>
<span class="t" id="t14" style="left:164.7px;top:263.5px;font-size:9.5px;color:#f0f0f0;font-weight:400;font-family:'Liberation Sans', sans-serif;transform:scaleX(0.9200);-webkit-text-stroke:0.3px #f0f0f0;">9</span>
<span class="t" id="t15" style="left:177.7px;top:263.5px;font-size:9.5px;color:#f0f0f0;font-weight:400;font-family:'Liberation Sans', sans-serif;transform:scaleX(0.8843);-webkit-text-stroke:0.3px #f0f0f0;">+10</span>
<span class="t" id="t16" style="left:197.0px;top:263.5px;font-size:9.5px;color:#f0f0f0;font-weight:400;font-family:'Liberation Sans', sans-serif;transform:scaleX(0.9349);-webkit-text-stroke:0.3px #f0f0f0;">+20</span>
<span class="t" id="t17" style="left:216.5px;top:263.5px;font-size:9.5px;color:#f0f0f0;font-weight:400;font-family:'Liberation Sans', sans-serif;transform:scaleX(0.9349);-webkit-text-stroke:0.3px #f0f0f0;">+30</span>
<span class="t" id="t18" style="left:236.5px;top:263.5px;font-size:9.5px;color:#f0f0f0;font-weight:400;font-family:'Liberation Sans', sans-serif;transform:scaleX(0.9349);-webkit-text-stroke:0.3px #f0f0f0;">+40</span>
<span class="t" id="t19" style="left:256.3px;top:263.5px;font-size:9.5px;color:#f0f0f0;font-weight:400;font-family:'Liberation Sans', sans-serif;transform:scaleX(0.9285);-webkit-text-stroke:0.3px #f0f0f0;">+50</span>
<span class="t" id="t20" style="left:276.0px;top:263.5px;font-size:9.5px;color:#f0f0f0;font-weight:400;font-family:'Liberation Sans', sans-serif;transform:scaleX(0.9159);-webkit-text-stroke:0.3px #f0f0f0;">+60</span>
<span class="t" id="t21" style="left:8.9px;top:253.3px;font-size:10.5px;color:#66bb9c;font-weight:400;font-family:'Liberation Sans', sans-serif;transform:scaleX(1.1318);">80</span>
<span class="t" id="t22" style="left:8.9px;top:267.1px;font-size:10.5px;color:#66bb9c;font-weight:400;font-family:'Liberation Sans', sans-serif;transform:scaleX(1.1318);">70</span>
<span class="t" id="t23" style="left:8.9px;top:280.4px;font-size:10.5px;color:#66bb9c;font-weight:400;font-family:'Liberation Sans', sans-serif;transform:scaleX(1.1318);">60</span>
<span class="t" id="t24" style="left:8.9px;top:294.5px;font-size:10.5px;color:#66bb9c;font-weight:400;font-family:'Liberation Sans', sans-serif;transform:scaleX(1.1318);">50</span>
<span class="t" id="t25" style="left:8.9px;top:307.5px;font-size:10.5px;color:#66bb9c;font-weight:400;font-family:'Liberation Sans', sans-serif;transform:scaleX(1.1318);">40</span>
<span class="t" id="t26" style="left:8.9px;top:321.4px;font-size:10.5px;color:#66bb9c;font-weight:400;font-family:'Liberation Sans', sans-serif;transform:scaleX(1.1318);">30</span>
<span class="t" id="t27" style="left:8.9px;top:334.7px;font-size:10.5px;color:#66bb9c;font-weight:400;font-family:'Liberation Sans', sans-serif;transform:scaleX(1.1318);">20</span>
<span class="t" id="t28" style="left:8.9px;top:348.3px;font-size:10.5px;color:#66bb9c;font-weight:400;font-family:'Liberation Sans', sans-serif;transform:scaleX(1.1318);">10</span>
<span class="t" id="t29" style="left:15.8px;top:361.2px;font-size:10.5px;color:#66bb9c;font-weight:400;font-family:'Liberation Sans', sans-serif;transform:scaleX(0.9833);">4</span>
<span class="t" id="t30" style="left:70.4px;top:372.4px;font-size:11.2px;color:#66bb9c;font-weight:400;font-family:'Liberation Sans', sans-serif;transform:scaleX(1.0486);">87.0</span>
<span class="t" id="t31" style="left:121.6px;top:372.4px;font-size:11.2px;color:#66bb9c;font-weight:400;font-family:'Liberation Sans', sans-serif;transform:scaleX(1.0486);">88.0</span>
<span class="t" id="t32" style="left:172.9px;top:372.4px;font-size:11.2px;color:#66bb9c;font-weight:400;font-family:'Liberation Sans', sans-serif;transform:scaleX(1.0486);">89.0</span>
<span class="t" id="t33" style="left:224.2px;top:372.4px;font-size:11.2px;color:#66bb9c;font-weight:400;font-family:'Liberation Sans', sans-serif;transform:scaleX(1.0486);">90.0</span>
<span class="t" id="t34" style="left:275.4px;top:372.4px;font-size:11.2px;color:#66bb9c;font-weight:400;font-family:'Liberation Sans', sans-serif;transform:scaleX(1.0486);">91.0</span>
<span class="t" id="t35" style="left:326.7px;top:372.4px;font-size:11.2px;color:#66bb9c;font-weight:400;font-family:'Liberation Sans', sans-serif;transform:scaleX(1.0486);">92.0</span>
<span class="t" id="t36" style="left:378.0px;top:372.4px;font-size:11.2px;color:#66bb9c;font-weight:400;font-family:'Liberation Sans', sans-serif;transform:scaleX(1.0486);">93.0</span>
<span class="t" id="t37" style="left:429.3px;top:372.4px;font-size:11.2px;color:#66bb9c;font-weight:400;font-family:'Liberation Sans', sans-serif;transform:scaleX(1.0486);">94.0</span>
<span class="t" id="t38" style="left:480.5px;top:372.4px;font-size:11.2px;color:#66bb9c;font-weight:400;font-family:'Liberation Sans', sans-serif;transform:scaleX(1.0486);">95.0</span>
<span class="t" id="t39" style="left:531.8px;top:372.4px;font-size:11.2px;color:#66bb9c;font-weight:400;font-family:'Liberation Sans', sans-serif;transform:scaleX(1.0486);">96.0</span>
<span class="t" id="t40" style="left:583.1px;top:372.4px;font-size:11.2px;color:#66bb9c;font-weight:400;font-family:'Liberation Sans', sans-serif;transform:scaleX(1.0486);">97.0</span>
<span class="t" id="t41" style="left:634.3px;top:372.4px;font-size:11.2px;color:#66bb9c;font-weight:400;font-family:'Liberation Sans', sans-serif;transform:scaleX(1.0486);">98.0</span>
<span class="t" id="t42" style="left:685.6px;top:372.4px;font-size:11.2px;color:#66bb9c;font-weight:400;font-family:'Liberation Sans', sans-serif;transform:scaleX(1.0486);">99.0</span>
<span class="t" id="t43" style="left:737.7px;top:372.4px;font-size:11.2px;color:#66bb9c;font-weight:400;font-family:'Liberation Sans', sans-serif;transform:scaleX(1.0225);">100.0</span>
<span class="t" id="t44" style="left:789.0px;top:372.4px;font-size:11.2px;color:#66bb9c;font-weight:400;font-family:'Liberation Sans', sans-serif;transform:scaleX(1.0225);">101.0</span>
<span class="t" id="t45" style="left:840.2px;top:372.4px;font-size:11.2px;color:#66bb9c;font-weight:400;font-family:'Liberation Sans', sans-serif;transform:scaleX(1.0225);">102.0</span>
<span class="t" id="t46" style="left:891.5px;top:372.4px;font-size:11.2px;color:#66bb9c;font-weight:400;font-family:'Liberation Sans', sans-serif;transform:scaleX(1.0225);">103.0</span>
<span class="t" id="t47" style="left:942.8px;top:372.4px;font-size:11.2px;color:#66bb9c;font-weight:400;font-family:'Liberation Sans', sans-serif;transform:scaleX(1.0225);">104.0</span>
<span class="t" id="t48" style="left:994.0px;top:372.4px;font-size:11.2px;color:#66bb9c;font-weight:400;font-family:'Liberation Sans', sans-serif;transform:scaleX(1.0225);">105.0</span>
<span class="t" id="t49" style="left:1045.3px;top:372.4px;font-size:11.2px;color:#66bb9c;font-weight:400;font-family:'Liberation Sans', sans-serif;transform:scaleX(1.0225);">106.0</span>
<span class="t" id="t50" style="left:1096.6px;top:372.4px;font-size:11.2px;color:#66bb9c;font-weight:400;font-family:'Liberation Sans', sans-serif;transform:scaleX(1.0225);">107.0</span>
<div style="position:absolute;left:911px;top:261px;width:32px;height:24px;border-radius:5px;background:rgba(94,186,163,0.88);box-shadow:0 0 7px rgba(90,210,170,0.45)"></div>
<div style="position:absolute;left:951px;top:261px;width:32px;height:24px;border-radius:5px;background:rgba(70,142,118,0.88);box-shadow:0 0 7px rgba(90,210,170,0.45)"></div>
<div style="position:absolute;left:991px;top:261px;width:32px;height:24px;border-radius:5px;background:rgba(94,186,163,0.88);box-shadow:0 0 7px rgba(90,210,170,0.45)"></div>
<div style="position:absolute;left:1031px;top:261px;width:32px;height:24px;border-radius:5px;background:rgba(94,186,163,0.88);box-shadow:0 0 7px rgba(90,210,170,0.45)"></div>
<div style="position:absolute;left:1071px;top:261px;width:32px;height:24px;border-radius:5px;background:rgba(70,142,118,0.88);box-shadow:0 0 7px rgba(90,210,170,0.45)"></div>
<div style="position:absolute;left:1111px;top:261px;width:32px;height:24px;border-radius:5px;background:rgba(70,142,118,0.88);box-shadow:0 0 7px rgba(90,210,170,0.45)"></div>
<svg class="ic" style="left:911px;top:261px" width="32" height="24" viewBox="-16 -12 32 24"><path d="M-4 -6 H1 V4" fill="none" stroke="#16211e" stroke-width="2.2"/><path d="M-3 1.5 L1 6 L5 1.5" fill="none" stroke="#16211e" stroke-width="2.2"/></svg>
<svg class="ic" style="left:951px;top:261px" width="32" height="24" viewBox="-16 -12 32 24"><path d="M-4.5 6 L0 -6 L4.5 6 M-2.6 1.5 H2.6" fill="none" stroke="#16211e" stroke-width="2"/></svg>
<svg class="ic" style="left:991px;top:261px" width="32" height="24" viewBox="-16 -12 32 24"><path d="M0 -5 V5 M-3 -2.5 L0 -6 L3 -2.5 M-3 2.5 L0 6 L3 2.5" fill="none" stroke="#16211e" stroke-width="2"/></svg>
<svg class="ic" style="left:1031px;top:261px" width="32" height="24" viewBox="-16 -12 32 24"><path d="M-6 -6 V5 H7" fill="none" stroke="#16211e" stroke-width="1.8"/><path d="M-3 3 V-1 Q-2 -3 0 -2 Q1 -4 3 -2.5 Q5 -2 5 0 V3 Z" fill="#16211e"/></svg>
<svg class="ic" style="left:1071px;top:261px" width="32" height="24" viewBox="-16 -12 32 24"><rect x="-4" y="-5" width="3" height="10" fill="#16211e"/><rect x="1" y="-5" width="3" height="10" fill="#16211e"/></svg>
<svg class="ic" style="left:1111px;top:261px" width="32" height="24" viewBox="-16 -12 32 24"><path d="M-5.6 -1 A5.8 5.8 0 0 1 4.2 -3.6" fill="none" stroke="#16211e" stroke-width="2.3"/><path d="M5.6 1 A5.8 5.8 0 0 1 -4.2 3.6" fill="none" stroke="#16211e" stroke-width="2.3"/><path d="M1.5 -6.8 L6.6 -6.8 L6.3 -1.5 Z" fill="#16211e"/><path d="M-1.5 6.8 L-6.6 6.8 L-6.3 1.5 Z" fill="#16211e"/></svg>
<svg class="ic" style="left:0;top:390px" width="1163" height="145" viewBox="0 390 1163 145"><path d="M0.0 437.7 C0.9 436.9 3.3 431.7 5.2 432.6 C7.1 433.5 9.2 442.5 11.6 442.9 C13.9 443.3 16.9 434.9 19.3 435.1 C21.7 435.3 23.2 444.2 25.8 444.2 C28.4 444.2 31.8 435.1 34.8 435.1 C37.8 435.1 41.0 444.3 43.8 444.2 C46.6 444.1 48.8 433.8 51.6 434.4 C54.4 435.0 57.8 445.9 60.6 448.0 C63.4 450.1 65.8 445.6 68.4 446.7 C71.0 447.8 73.5 453.9 76.1 454.5 C78.7 455.1 81.6 450.8 83.8 450.6 C86.0 450.4 86.8 453.4 89.0 453.2 C91.2 453.0 94.5 449.3 96.7 449.3 C98.9 449.3 98.2 452.6 101.9 453.2 C105.6 453.8 114.6 455.1 118.7 453.2 C122.8 451.3 124.1 443.0 126.4 441.6 C128.8 440.2 130.7 445.4 132.8 444.7 C135.0 444.0 136.9 438.4 139.3 437.7 C141.7 437.0 145.1 439.0 147.0 440.3 C148.9 441.6 149.4 446.3 150.9 445.5 C152.4 444.7 153.6 435.7 156.0 435.7 C158.4 435.7 162.5 443.4 165.1 445.5 C167.7 447.6 168.7 445.7 171.5 448.0 C174.3 450.3 178.8 459.5 181.8 459.1 C184.8 458.7 186.8 449.1 189.6 445.5 C192.4 441.9 195.8 439.7 198.6 437.7 C201.4 435.7 203.7 433.4 206.3 433.3 C208.9 433.2 211.1 437.0 214.1 437.2 C217.1 437.4 221.2 434.1 224.4 434.4 C227.6 434.7 230.4 438.5 233.4 439.0 C236.4 439.5 239.9 436.8 242.5 437.2 C245.1 437.6 246.3 440.9 248.9 441.6 C251.5 442.3 256.0 440.8 257.9 441.6 C259.8 442.5 259.2 446.3 260.5 446.7 C261.8 447.1 264.2 444.0 265.7 444.2 C267.2 444.4 267.6 447.9 269.5 448.0 C271.4 448.1 274.9 446.2 277.3 444.7 C279.7 443.2 282.0 439.5 283.7 439.0 C285.4 438.5 285.9 442.0 287.6 441.6 C289.3 441.2 291.8 436.8 293.9 436.4 C296.0 436.0 298.6 439.0 300.3 439.5 C302.0 440.0 301.6 437.2 304.2 439.5 C306.8 441.8 312.4 452.6 315.8 453.2 C319.2 453.8 321.8 444.8 324.8 442.9 C327.8 441.0 331.4 442.5 333.8 441.6 C336.2 440.7 336.2 436.1 339.0 437.7 C341.8 439.3 347.6 449.1 350.6 451.1 C353.6 453.1 355.2 449.5 357.1 449.8 C359.0 450.1 359.9 451.9 362.2 453.2 C364.5 454.5 369.0 457.1 371.2 457.6 C373.4 458.2 373.4 455.7 375.1 456.5 C376.8 457.3 378.8 462.3 381.6 462.2 C384.4 462.1 388.2 459.9 391.9 455.8 C395.5 451.7 399.4 441.0 403.5 437.7 C407.6 434.4 412.5 434.3 416.4 435.9 C420.3 437.5 423.7 445.1 426.7 447.3 C429.7 449.5 431.4 447.8 434.4 449.3 C437.4 450.8 440.9 456.1 444.8 456.5 C448.7 456.9 453.8 454.7 457.7 451.9 C461.6 449.1 465.2 440.9 468.0 439.5 C470.8 438.1 472.2 443.3 474.4 443.6 C476.5 443.9 477.9 440.2 480.9 441.1 C483.9 442.0 488.6 449.7 492.5 448.8 C496.4 447.9 501.3 437.2 504.1 435.9 C506.9 434.6 507.3 441.5 509.2 441.1 C511.1 440.7 512.9 431.6 515.7 433.3 C518.5 435.0 523.4 448.4 526.0 451.1 C528.6 453.9 529.5 449.0 531.2 449.8 C532.9 450.6 533.9 454.8 536.3 455.8 C538.7 456.8 542.6 455.4 545.4 455.8 C548.2 456.2 550.8 459.5 553.1 458.4 C555.5 457.3 557.8 450.4 559.5 449.3 C561.2 448.2 561.5 453.8 563.4 451.9 C565.3 450.0 568.7 440.7 571.1 437.7 C573.5 434.7 575.5 434.2 577.6 433.8 C579.8 433.4 581.9 435.5 584.0 435.1 C586.1 434.7 588.2 430.2 590.3 431.3 C592.4 432.4 595.1 439.8 596.8 441.6 C598.5 443.5 599.1 441.8 600.6 442.4 C602.1 442.9 602.8 443.8 605.8 444.9 C608.8 446.0 615.3 447.7 618.7 448.8 C622.1 449.9 623.8 450.1 626.4 451.4 C629.0 452.7 631.8 456.7 634.2 456.5 C636.6 456.3 638.5 450.7 640.6 450.1 C642.8 449.5 644.5 451.8 647.1 452.7 C649.7 453.6 653.3 453.5 656.1 455.8 C658.9 458.1 661.0 465.8 663.8 466.6 C666.6 467.5 669.4 464.0 672.9 460.9 C676.4 457.8 681.3 449.3 684.5 448.0 C687.7 446.7 690.1 452.8 692.2 453.2 C694.4 453.6 695.0 450.3 697.4 450.6 C699.8 450.9 703.4 455.1 706.4 455.0 C709.4 454.9 713.0 450.5 715.4 450.1 C717.8 449.7 718.9 452.4 720.6 452.4 C722.3 452.3 722.5 450.5 725.7 449.8 C728.9 449.1 736.0 449.7 739.9 448.0 C743.8 446.3 746.3 440.6 748.9 439.5 C751.5 438.4 753.4 441.9 755.4 441.6 C757.4 441.3 758.9 438.1 760.6 437.7 C762.3 437.3 763.8 436.9 765.7 439.0 C767.6 441.1 770.3 448.7 772.2 450.6 C774.1 452.5 775.4 449.7 777.3 450.6 C779.2 451.6 781.0 455.7 783.8 456.3 C786.6 456.9 790.7 454.6 794.1 454.5 C797.5 454.4 801.8 456.4 804.4 455.8 C807.0 455.2 806.6 452.8 809.6 450.6 C812.6 448.5 818.9 444.2 822.5 442.9 C826.1 441.6 829.4 443.1 831.5 442.9 C833.6 442.7 833.9 441.0 835.4 441.6 C836.9 442.2 837.9 447.8 840.5 446.7 C843.1 445.6 848.0 435.5 850.8 435.1 C853.6 434.7 854.7 441.4 857.3 444.2 C859.9 447.0 863.5 448.8 866.3 451.9 C869.1 455.0 871.8 462.4 874.0 463.0 C876.2 463.6 878.2 456.9 879.8 455.8 C881.4 454.7 882.1 457.1 883.6 456.5 C885.1 455.9 885.8 453.1 888.8 452.4 C891.8 451.7 898.7 452.0 901.7 452.4 C904.7 452.8 904.9 455.4 906.8 455.0 C908.7 454.6 911.3 450.8 913.3 450.1 C915.2 449.5 915.9 450.9 918.5 451.1 C921.1 451.3 926.0 450.5 928.8 451.1 C931.6 451.8 933.5 454.4 935.2 455.0 C936.9 455.6 937.4 453.8 939.1 455.0 C940.8 456.2 943.4 461.4 945.5 462.2 C947.6 463.0 949.6 461.4 952.0 459.6 C954.4 457.8 958.0 452.7 959.7 451.4 C961.4 450.1 960.8 453.0 962.3 451.9 C963.8 450.8 966.6 445.5 968.8 444.7 C970.9 443.9 973.1 445.3 975.2 447.3 C977.3 449.3 978.0 453.8 981.6 456.5 C985.2 459.2 993.0 462.5 997.1 463.5 C1001.2 464.5 1002.8 464.0 1006.2 462.7 C1009.7 461.4 1014.6 460.4 1017.8 455.8 C1021.0 451.2 1022.9 439.4 1025.5 435.1 C1028.1 430.8 1030.4 432.1 1033.2 430.0 C1036.0 427.9 1039.7 422.0 1042.3 422.2 C1044.9 422.4 1046.1 430.4 1048.7 431.3 C1051.3 432.2 1054.5 426.2 1057.7 427.4 C1060.9 428.6 1064.2 434.3 1068.1 438.5 C1072.0 442.7 1077.8 451.0 1081.0 452.4 C1084.2 453.8 1085.3 447.6 1087.4 446.7 C1089.5 445.8 1091.0 446.0 1093.8 446.7 C1096.6 447.4 1100.1 449.6 1104.2 451.1 C1108.3 452.6 1114.8 457.5 1118.4 455.8 C1122.1 454.1 1123.8 443.1 1126.1 441.1 C1128.4 439.1 1129.7 442.5 1132.5 443.6 C1135.3 444.8 1140.1 445.4 1142.9 448.0 C1145.7 450.6 1147.2 459.3 1149.3 459.1 C1151.4 458.9 1154.3 448.6 1155.8 446.7 C1157.3 444.8 1157.9 447.8 1158.3 448.0 L1158.3 529.5 L0 529.5 Z" fill="#1e2226"/><line x1="46" y1="401.6" x2="1112" y2="401.6" stroke="rgba(120,140,135,0.22)" stroke-width="1"/><line x1="46" y1="459.6" x2="1112" y2="459.6" stroke="rgba(120,140,135,0.22)" stroke-width="1"/><line x1="46" y1="520" x2="1112" y2="520" stroke="rgba(120,140,135,0.22)" stroke-width="1"/><path d="M0.0 437.7 C0.9 436.9 3.3 431.7 5.2 432.6 C7.1 433.5 9.2 442.5 11.6 442.9 C13.9 443.3 16.9 434.9 19.3 435.1 C21.7 435.3 23.2 444.2 25.8 444.2 C28.4 444.2 31.8 435.1 34.8 435.1 C37.8 435.1 41.0 444.3 43.8 444.2 C46.6 444.1 48.8 433.8 51.6 434.4 C54.4 435.0 57.8 445.9 60.6 448.0 C63.4 450.1 65.8 445.6 68.4 446.7 C71.0 447.8 73.5 453.9 76.1 454.5 C78.7 455.1 81.6 450.8 83.8 450.6 C86.0 450.4 86.8 453.4 89.0 453.2 C91.2 453.0 94.5 449.3 96.7 449.3 C98.9 449.3 98.2 452.6 101.9 453.2 C105.6 453.8 114.6 455.1 118.7 453.2 C122.8 451.3 124.1 443.0 126.4 441.6 C128.8 440.2 130.7 445.4 132.8 444.7 C135.0 444.0 136.9 438.4 139.3 437.7 C141.7 437.0 145.1 439.0 147.0 440.3 C148.9 441.6 149.4 446.3 150.9 445.5 C152.4 444.7 153.6 435.7 156.0 435.7 C158.4 435.7 162.5 443.4 165.1 445.5 C167.7 447.6 168.7 445.7 171.5 448.0 C174.3 450.3 178.8 459.5 181.8 459.1 C184.8 458.7 186.8 449.1 189.6 445.5 C192.4 441.9 195.8 439.7 198.6 437.7 C201.4 435.7 203.7 433.4 206.3 433.3 C208.9 433.2 211.1 437.0 214.1 437.2 C217.1 437.4 221.2 434.1 224.4 434.4 C227.6 434.7 230.4 438.5 233.4 439.0 C236.4 439.5 239.9 436.8 242.5 437.2 C245.1 437.6 246.3 440.9 248.9 441.6 C251.5 442.3 256.0 440.8 257.9 441.6 C259.8 442.5 259.2 446.3 260.5 446.7 C261.8 447.1 264.2 444.0 265.7 444.2 C267.2 444.4 267.6 447.9 269.5 448.0 C271.4 448.1 274.9 446.2 277.3 444.7 C279.7 443.2 282.0 439.5 283.7 439.0 C285.4 438.5 285.9 442.0 287.6 441.6 C289.3 441.2 291.8 436.8 293.9 436.4 C296.0 436.0 298.6 439.0 300.3 439.5 C302.0 440.0 301.6 437.2 304.2 439.5 C306.8 441.8 312.4 452.6 315.8 453.2 C319.2 453.8 321.8 444.8 324.8 442.9 C327.8 441.0 331.4 442.5 333.8 441.6 C336.2 440.7 336.2 436.1 339.0 437.7 C341.8 439.3 347.6 449.1 350.6 451.1 C353.6 453.1 355.2 449.5 357.1 449.8 C359.0 450.1 359.9 451.9 362.2 453.2 C364.5 454.5 369.0 457.1 371.2 457.6 C373.4 458.2 373.4 455.7 375.1 456.5 C376.8 457.3 378.8 462.3 381.6 462.2 C384.4 462.1 388.2 459.9 391.9 455.8 C395.5 451.7 399.4 441.0 403.5 437.7 C407.6 434.4 412.5 434.3 416.4 435.9 C420.3 437.5 423.7 445.1 426.7 447.3 C429.7 449.5 431.4 447.8 434.4 449.3 C437.4 450.8 440.9 456.1 444.8 456.5 C448.7 456.9 453.8 454.7 457.7 451.9 C461.6 449.1 465.2 440.9 468.0 439.5 C470.8 438.1 472.2 443.3 474.4 443.6 C476.5 443.9 477.9 440.2 480.9 441.1 C483.9 442.0 488.6 449.7 492.5 448.8 C496.4 447.9 501.3 437.2 504.1 435.9 C506.9 434.6 507.3 441.5 509.2 441.1 C511.1 440.7 512.9 431.6 515.7 433.3 C518.5 435.0 523.4 448.4 526.0 451.1 C528.6 453.9 529.5 449.0 531.2 449.8 C532.9 450.6 533.9 454.8 536.3 455.8 C538.7 456.8 542.6 455.4 545.4 455.8 C548.2 456.2 550.8 459.5 553.1 458.4 C555.5 457.3 557.8 450.4 559.5 449.3 C561.2 448.2 561.5 453.8 563.4 451.9 C565.3 450.0 568.7 440.7 571.1 437.7 C573.5 434.7 575.5 434.2 577.6 433.8 C579.8 433.4 581.9 435.5 584.0 435.1 C586.1 434.7 588.2 430.2 590.3 431.3 C592.4 432.4 595.1 439.8 596.8 441.6 C598.5 443.5 599.1 441.8 600.6 442.4 C602.1 442.9 602.8 443.8 605.8 444.9 C608.8 446.0 615.3 447.7 618.7 448.8 C622.1 449.9 623.8 450.1 626.4 451.4 C629.0 452.7 631.8 456.7 634.2 456.5 C636.6 456.3 638.5 450.7 640.6 450.1 C642.8 449.5 644.5 451.8 647.1 452.7 C649.7 453.6 653.3 453.5 656.1 455.8 C658.9 458.1 661.0 465.8 663.8 466.6 C666.6 467.5 669.4 464.0 672.9 460.9 C676.4 457.8 681.3 449.3 684.5 448.0 C687.7 446.7 690.1 452.8 692.2 453.2 C694.4 453.6 695.0 450.3 697.4 450.6 C699.8 450.9 703.4 455.1 706.4 455.0 C709.4 454.9 713.0 450.5 715.4 450.1 C717.8 449.7 718.9 452.4 720.6 452.4 C722.3 452.3 722.5 450.5 725.7 449.8 C728.9 449.1 736.0 449.7 739.9 448.0 C743.8 446.3 746.3 440.6 748.9 439.5 C751.5 438.4 753.4 441.9 755.4 441.6 C757.4 441.3 758.9 438.1 760.6 437.7 C762.3 437.3 763.8 436.9 765.7 439.0 C767.6 441.1 770.3 448.7 772.2 450.6 C774.1 452.5 775.4 449.7 777.3 450.6 C779.2 451.6 781.0 455.7 783.8 456.3 C786.6 456.9 790.7 454.6 794.1 454.5 C797.5 454.4 801.8 456.4 804.4 455.8 C807.0 455.2 806.6 452.8 809.6 450.6 C812.6 448.5 818.9 444.2 822.5 442.9 C826.1 441.6 829.4 443.1 831.5 442.9 C833.6 442.7 833.9 441.0 835.4 441.6 C836.9 442.2 837.9 447.8 840.5 446.7 C843.1 445.6 848.0 435.5 850.8 435.1 C853.6 434.7 854.7 441.4 857.3 444.2 C859.9 447.0 863.5 448.8 866.3 451.9 C869.1 455.0 871.8 462.4 874.0 463.0 C876.2 463.6 878.2 456.9 879.8 455.8 C881.4 454.7 882.1 457.1 883.6 456.5 C885.1 455.9 885.8 453.1 888.8 452.4 C891.8 451.7 898.7 452.0 901.7 452.4 C904.7 452.8 904.9 455.4 906.8 455.0 C908.7 454.6 911.3 450.8 913.3 450.1 C915.2 449.5 915.9 450.9 918.5 451.1 C921.1 451.3 926.0 450.5 928.8 451.1 C931.6 451.8 933.5 454.4 935.2 455.0 C936.9 455.6 937.4 453.8 939.1 455.0 C940.8 456.2 943.4 461.4 945.5 462.2 C947.6 463.0 949.6 461.4 952.0 459.6 C954.4 457.8 958.0 452.7 959.7 451.4 C961.4 450.1 960.8 453.0 962.3 451.9 C963.8 450.8 966.6 445.5 968.8 444.7 C970.9 443.9 973.1 445.3 975.2 447.3 C977.3 449.3 978.0 453.8 981.6 456.5 C985.2 459.2 993.0 462.5 997.1 463.5 C1001.2 464.5 1002.8 464.0 1006.2 462.7 C1009.7 461.4 1014.6 460.4 1017.8 455.8 C1021.0 451.2 1022.9 439.4 1025.5 435.1 C1028.1 430.8 1030.4 432.1 1033.2 430.0 C1036.0 427.9 1039.7 422.0 1042.3 422.2 C1044.9 422.4 1046.1 430.4 1048.7 431.3 C1051.3 432.2 1054.5 426.2 1057.7 427.4 C1060.9 428.6 1064.2 434.3 1068.1 438.5 C1072.0 442.7 1077.8 451.0 1081.0 452.4 C1084.2 453.8 1085.3 447.6 1087.4 446.7 C1089.5 445.8 1091.0 446.0 1093.8 446.7 C1096.6 447.4 1100.1 449.6 1104.2 451.1 C1108.3 452.6 1114.8 457.5 1118.4 455.8 C1122.1 454.1 1123.8 443.1 1126.1 441.1 C1128.4 439.1 1129.7 442.5 1132.5 443.6 C1135.3 444.8 1140.1 445.4 1142.9 448.0 C1145.7 450.6 1147.2 459.3 1149.3 459.1 C1151.4 458.9 1154.3 448.6 1155.8 446.7 C1157.3 444.8 1157.9 447.8 1158.3 448.0" fill="none" stroke="#5fc3a0" stroke-width="2.2" stroke-linejoin="round"/></svg>
<span class="t" id="t51" style="left:14.5px;top:396.1px;font-size:11.2px;color:#66bb9c;font-weight:400;font-family:'Liberation Sans', sans-serif;transform:scaleX(1.0440);">28.0</span>
<span class="t" id="t52" style="left:1121.0px;top:396.1px;font-size:11.2px;color:#66bb9c;font-weight:400;font-family:'Liberation Sans', sans-serif;transform:scaleX(1.0440);">28.0</span>
<span class="t" id="t53" style="left:14.5px;top:454.1px;font-size:11.2px;color:#66bb9c;font-weight:400;font-family:'Liberation Sans', sans-serif;transform:scaleX(1.0440);">27.0</span>
<span class="t" id="t54" style="left:1121.0px;top:454.1px;font-size:11.2px;color:#66bb9c;font-weight:400;font-family:'Liberation Sans', sans-serif;transform:scaleX(1.0440);">27.0</span>
<span class="t" id="t55" style="left:14.5px;top:514.5px;font-size:11.2px;color:#66bb9c;font-weight:400;font-family:'Liberation Sans', sans-serif;transform:scaleX(1.0440);">26.0</span>
<span class="t" id="t56" style="left:1121.0px;top:514.5px;font-size:11.2px;color:#66bb9c;font-weight:400;font-family:'Liberation Sans', sans-serif;transform:scaleX(1.0440);">26.0</span>
<div style="position:absolute;left:0px;top:551px;width:79px;height:89.5px;border-radius:14px;background:#54b892"></div>
<div style="position:absolute;left:33px;top:589px;width:12.5px;height:12.5px;border-radius:3px;background:#1d2125"></div>
<div style="position:absolute;left:99px;top:551px;width:355.5px;height:89.5px;border-radius:15px;background:#1d2125"></div>
<div style="position:absolute;left:472px;top:551px;width:214.5px;height:89.5px;border-radius:15px;background:#1d2125"></div>
<svg class="ic" style="left:549.0px;top:578.0px;opacity:1.0" width="60.0" height="36.0" viewBox="-30 -18 60 36"><defs><radialGradient id="rg" cx="0.5" cy="0.5" r="0.5"><stop offset="0" stop-color="#ffffff"/><stop offset="0.3" stop-color="#f6fff2"/><stop offset="0.5" stop-color="#b4ec84"/><stop offset="1" stop-color="#a4e674"/></radialGradient></defs><circle cx="0" cy="0" r="16" fill="#0b140c" opacity="0.9"/><circle cx="0" cy="0" r="14.2" fill="url(#rg)"/><path d="M-13.2 -14.5 A19.6 19.6 0 0 0 -13.2 14.5 M13.2 -14.5 A19.6 19.6 0 0 1 13.2 14.5" fill="none" stroke="#0b0f10" stroke-width="6.5" stroke-linecap="round" opacity="0.7"/><path d="M-23.9 -9.2 A25.6 25.6 0 0 0 -23.9 9.2 M23.9 -9.2 A25.6 25.6 0 0 1 23.9 9.2" fill="none" stroke="#0b0f10" stroke-width="6" stroke-linecap="round" opacity="0.7"/><path d="M-13.2 -14.5 A19.6 19.6 0 0 0 -13.2 14.5" fill="none" stroke="#ffffff" stroke-width="3.8" stroke-linecap="round"/><path d="M13.2 -14.5 A19.6 19.6 0 0 1 13.2 14.5" fill="none" stroke="#ffffff" stroke-width="3.8" stroke-linecap="round"/><path d="M-23.9 -9.2 A25.6 25.6 0 0 0 -23.9 9.2" fill="none" stroke="#d0ec80" stroke-width="3.4" stroke-linecap="round"/><path d="M23.9 -9.2 A25.6 25.6 0 0 1 23.9 9.2" fill="none" stroke="#8cdca0" stroke-width="3.4" stroke-linecap="round"/></svg>
<div style="position:absolute;left:707px;top:551px;width:334px;height:89.5px;border-radius:15px;background:#223430"></div>
<span class="t" id="t57" style="left:836.2px;top:565.8px;font-size:24px;color:#58c39c;font-weight:700;font-family:'Liberation Sans', sans-serif;transform:scaleX(0.8799);-webkit-text-stroke:0.5px #58c39c;">No PTY</span>
<span class="t" id="t58" style="left:774.8px;top:603.9px;font-size:20.7px;color:#8b9593;font-weight:700;font-family:'Liberation Sans', sans-serif;transform:scaleX(0.8935);">TP</span>
<span class="t" id="t59" style="left:813.8px;top:603.9px;font-size:20.7px;color:#8b9593;font-weight:700;font-family:'Liberation Sans', sans-serif;transform:scaleX(0.9310);">TA</span>
<svg class="ic" style="left:901px;top:605px" width="26" height="18" viewBox="0 0 26 18"><circle cx="8.5" cy="9" r="6.6" fill="none" stroke="#ffffff" stroke-width="2.2"/><circle cx="16.5" cy="9" r="6.6" fill="none" stroke="#ffffff" stroke-width="2.2"/></svg>
<span class="t" id="t60" style="left:941.9px;top:603.9px;font-size:20.7px;color:#8b9593;font-weight:700;font-family:'Liberation Sans', sans-serif;transform:scaleX(1.0160);">MS</span>
<div style="position:absolute;left:1061px;top:551px;width:97.5px;height:420.29999999999995px;border-radius:15px;background:#1d2125"></div>
<span class="t" id="t61" style="left:1096.7px;top:565.8px;font-size:24px;color:#58c39c;font-weight:700;font-family:'Liberation Sans', sans-serif;transform:scaleX(0.8394);-webkit-text-stroke:0.5px #58c39c;">AF</span>
<div style="position:absolute;left:0px;top:661px;width:333px;height:122.39999999999998px;border-radius:15px;background:#1d2125"></div>
<span class="t" id="t62" style="left:124.3px;top:676.6px;font-size:23px;color:#58c39c;font-weight:700;font-family:'Liberation Sans', sans-serif;transform:scaleX(0.8806);-webkit-text-stroke:0.5px #58c39c;">PI CODE</span>
<span class="t" id="t63" style="left:153.5px;top:721.3px;font-size:50px;color:#9a9fa2;font-weight:400;font-family:'Liberation Sans', sans-serif;transform:scaleX(0.8792);-webkit-text-stroke:0.3px #1d2125;">?</span>
<div style="position:absolute;left:353px;top:661px;width:333.5px;height:122.39999999999998px;border-radius:15px;background:#1d2125"></div>
<span class="t" id="t64" style="left:455.1px;top:676.3px;font-size:23px;color:#58c39c;font-weight:700;font-family:'Liberation Sans', sans-serif;transform:scaleX(0.8989);-webkit-text-stroke:0.5px #58c39c;">FREQUENCY</span>
<span class="t" id="t65" style="left:441.2px;top:722.1px;font-size:50px;color:#ffffff;font-weight:400;font-family:'Liberation Sans', sans-serif;transform:scaleX(1.0218);-webkit-text-stroke:0.9px #1d2125;">88.</span>
<span class="t" id="t66" style="left:542.0px;top:722.1px;font-size:50px;color:#ffffff;font-weight:400;font-family:'Liberation Sans', sans-serif;transform:scaleX(1.0112);-webkit-text-stroke:0.9px #1d2125;">00</span>
<svg class="ic" style="left:0;top:0" width="1163" height="1066" viewBox="0 0 1163 1066"><path d="M530.3 729.2 V764.5" stroke="#ffffff" stroke-width="3.6"/><path d="M517.6 739 L530.6 729.6" stroke="#ffffff" stroke-width="3.4"/></svg>
<div style="position:absolute;left:707px;top:661px;width:334.5px;height:122.39999999999998px;border-radius:15px;background:#1d2125"></div>
<span class="t" id="t67" style="left:835.3px;top:676.3px;font-size:23px;color:#58c39c;font-weight:700;font-family:'Liberation Sans', sans-serif;transform:scaleX(0.8809);-webkit-text-stroke:0.5px #58c39c;">SIGNAL</span>
<svg class="ic" style="left:843px;top:709px" width="11" height="12" viewBox="0 0 11 12"><path d="M5.5 11.5 V1.5 M1 6 L5.5 1.3 L10 6" fill="none" stroke="#dddddd" stroke-width="1.6"/></svg>
<span class="t" id="t68" style="left:857.0px;top:708.9px;font-size:12.5px;color:#cfd2d3;font-weight:400;font-family:'Liberation Sans', sans-serif;transform:scaleX(0.9768);">28.2 dBf</span>
<span class="t" id="t69" style="left:805.3px;top:722.3px;font-size:49.5px;color:#ffffff;font-weight:400;font-family:'Liberation Sans', sans-serif;transform:scaleX(0.9936);-webkit-text-stroke:0.9px #1d2125;">27</span>
<span class="t" id="t70" style="left:862.5px;top:722.3px;font-size:49.5px;color:#c6c9cb;font-weight:400;font-family:'Liberation Sans', sans-serif;transform:scaleX(0.6333);-webkit-text-stroke:0.9px #1d2125;">.</span>
<svg class="ic" style="left:0;top:0" width="1163" height="1066" viewBox="0 0 1163 1066"><path d="M887.6 733 V764.3" stroke="#c6c9cb" stroke-width="3.6"/><path d="M877.2 740.6 L888 733.2" stroke="#c6c9cb" stroke-width="3.4"/></svg>
<span class="t" id="t71" style="left:908.1px;top:741.1px;font-size:27px;color:#9a9fa2;font-weight:400;font-family:'Liberation Sans', sans-serif;transform:scaleX(0.8645);-webkit-text-stroke:0.5px #1d2125;">dBf</span>
<div style="position:absolute;left:120px;top:804px;width:213px;height:48px;border-radius:14px;overflow:hidden;background:#54b892"><div style="position:absolute;left:0;top:0;width:107px;height:48px;background:#39765f"></div></div>
<span class="t" id="t72" style="left:163.0px;top:822.4px;font-size:12.7px;color:#16211e;font-weight:700;font-family:'Liberation Sans', sans-serif;transform:scaleX(0.8151);">cEQ</span>
<span class="t" id="t73" style="left:269.2px;top:822.4px;font-size:12.7px;color:#16211e;font-weight:700;font-family:'Liberation Sans', sans-serif;transform:scaleX(0.9550);">iMS</span>
<div style="position:absolute;left:353px;top:804px;width:334px;height:48px;border-radius:14px;overflow:hidden;background:#1d2125"><div style="position:absolute;left:0;top:0;width:83px;height:48px;background:#54b892"></div><div style="position:absolute;right:0;top:0;width:84px;height:48px;background:#54b892"></div></div>
<svg class="ic" style="left:388px;top:821px" width="12" height="14" viewBox="0 0 12 14"><path d="M8.5 2 L3.5 7 L8.5 12" fill="none" stroke="#16211e" stroke-width="2"/></svg>
<svg class="ic" style="left:639px;top:821px" width="12" height="14" viewBox="0 0 12 14"><path d="M3.5 2 L8.5 7 L3.5 12" fill="none" stroke="#16211e" stroke-width="2"/></svg>
<span class="t" id="t74" style="left:457.0px;top:822.0px;font-size:13px;color:#a8adae;font-weight:400;font-family:'Liberation Sans', sans-serif;transform:scaleX(0.9603);">Frequency</span>
<div style="position:absolute;left:707px;top:804.5px;width:256px;height:47.5px;border-radius:18px;overflow:hidden;background:#54b892"><div style="position:absolute;right:0;top:0;width:49px;height:47.5px;border-radius:20px 0 0 20px;background:#5cd2a3"></div></div>
<svg class="ic" style="left:930px;top:821px" width="19" height="14" viewBox="0 0 19 14"><path d="M1 4.5 H4.5 L9 1 V13 L4.5 9.5 H1 Z" fill="#3f9f80"/><path d="M11.5 4.5 Q13.5 7 11.5 9.5 M14 2.5 Q17.5 7 14 11.5" fill="none" stroke="#3f9f80" stroke-width="1.5"/></svg>
<div style="position:absolute;left:978px;top:804.5px;width:63px;height:47.5px;border-radius:14px;background:#38785f"></div>
<svg class="ic" style="left:1000px;top:818px" width="18" height="19" viewBox="0 0 18 19"><rect x="1.5" y="1" width="2.6" height="17" fill="#16211e"/><path d="M4 2 Q8 0 11 2 Q14 4 17 2.5 V11 Q14 12.5 11 10.5 Q8 8.5 4 10.5 Z" fill="#16211e"/></svg>
<div style="position:absolute;left:0px;top:872px;width:686.5px;height:99.29999999999995px;border-radius:15px;background:#1d2125"></div>
<span class="t" id="t75" style="left:283.4px;top:883.2px;font-size:23px;color:#58c39c;font-weight:700;font-family:'Liberation Sans', sans-serif;transform:scaleX(0.8859);-webkit-text-stroke:0.5px #58c39c;">RADIOTEXT</span>
<div style="position:absolute;left:707px;top:871.6px;width:333.5px;height:99.69999999999993px;border-radius:15px;background:#1d2125"></div>
<div style="position:absolute;left:-1px;top:992px;width:104.5px;height:48px;border-radius:10px;background:#1d2125"></div>
<svg class="ic" style="left:22.0px;top:998.0px" width="60.0" height="36.0" viewBox="-30 -18 60 36"><circle cx="0" cy="0" r="12" fill="none" stroke="#333a35" stroke-width="2.8"/><path d="M-14.8 -15.6 A21.5 21.5 0 0 0 -14.8 15.6 M14.8 -15.6 A21.5 21.5 0 0 1 14.8 15.6" fill="none" stroke="#3a4043" stroke-width="3.4" stroke-linecap="round"/><path d="M-27.9 -9.4 A29.5 29.5 0 0 0 -27.9 9.4" fill="none" stroke="#363a2a" stroke-width="3" stroke-linecap="round"/><path d="M27.9 -9.4 A29.5 29.5 0 0 1 27.9 9.4" fill="none" stroke="#2d3b31" stroke-width="3" stroke-linecap="round"/></svg>
<span class="t" id="t76" style="left:35.8px;top:1011.2px;font-size:13.5px;color:#ffffff;font-weight:400;font-family:'Liberation Mono', monospace;transform:scaleX(1.0030);-webkit-text-stroke:0.35px #ffffff;">87.5</span>
<div style="position:absolute;left:116.5px;top:992px;width:103px;height:48px;border-radius:10px;background:#1d2125"></div>
<svg class="ic" style="left:138.5px;top:998.0px" width="60.0" height="36.0" viewBox="-30 -18 60 36"><circle cx="0" cy="0" r="12" fill="none" stroke="#333a35" stroke-width="2.8"/><path d="M-14.8 -15.6 A21.5 21.5 0 0 0 -14.8 15.6 M14.8 -15.6 A21.5 21.5 0 0 1 14.8 15.6" fill="none" stroke="#3a4043" stroke-width="3.4" stroke-linecap="round"/><path d="M-27.9 -9.4 A29.5 29.5 0 0 0 -27.9 9.4" fill="none" stroke="#363a2a" stroke-width="3" stroke-linecap="round"/><path d="M27.9 -9.4 A29.5 29.5 0 0 1 27.9 9.4" fill="none" stroke="#2d3b31" stroke-width="3" stroke-linecap="round"/></svg>
<span class="t" id="t77" style="left:152.3px;top:1011.2px;font-size:13.5px;color:#ffffff;font-weight:400;font-family:'Liberation Mono', monospace;transform:scaleX(1.0030);-webkit-text-stroke:0.35px #ffffff;">87.5</span>
<div style="position:absolute;left:233.5px;top:992px;width:103px;height:48px;border-radius:10px;background:#1d2125"></div>
<svg class="ic" style="left:255.5px;top:998.0px" width="60.0" height="36.0" viewBox="-30 -18 60 36"><circle cx="0" cy="0" r="12" fill="none" stroke="#333a35" stroke-width="2.8"/><path d="M-14.8 -15.6 A21.5 21.5 0 0 0 -14.8 15.6 M14.8 -15.6 A21.5 21.5 0 0 1 14.8 15.6" fill="none" stroke="#3a4043" stroke-width="3.4" stroke-linecap="round"/><path d="M-27.9 -9.4 A29.5 29.5 0 0 0 -27.9 9.4" fill="none" stroke="#363a2a" stroke-width="3" stroke-linecap="round"/><path d="M27.9 -9.4 A29.5 29.5 0 0 1 27.9 9.4" fill="none" stroke="#2d3b31" stroke-width="3" stroke-linecap="round"/></svg>
<span class="t" id="t78" style="left:269.3px;top:1011.2px;font-size:13.5px;color:#ffffff;font-weight:400;font-family:'Liberation Mono', monospace;transform:scaleX(1.0030);-webkit-text-stroke:0.35px #ffffff;">87.5</span>
<div style="position:absolute;left:351px;top:992px;width:103px;height:48px;border-radius:10px;background:#1d2125"></div>
<svg class="ic" style="left:373.0px;top:998.0px" width="60.0" height="36.0" viewBox="-30 -18 60 36"><circle cx="0" cy="0" r="12" fill="none" stroke="#333a35" stroke-width="2.8"/><path d="M-14.8 -15.6 A21.5 21.5 0 0 0 -14.8 15.6 M14.8 -15.6 A21.5 21.5 0 0 1 14.8 15.6" fill="none" stroke="#3a4043" stroke-width="3.4" stroke-linecap="round"/><path d="M-27.9 -9.4 A29.5 29.5 0 0 0 -27.9 9.4" fill="none" stroke="#363a2a" stroke-width="3" stroke-linecap="round"/><path d="M27.9 -9.4 A29.5 29.5 0 0 1 27.9 9.4" fill="none" stroke="#2d3b31" stroke-width="3" stroke-linecap="round"/></svg>
<span class="t" id="t79" style="left:386.8px;top:1011.2px;font-size:13.5px;color:#ffffff;font-weight:400;font-family:'Liberation Mono', monospace;transform:scaleX(1.0030);-webkit-text-stroke:0.35px #ffffff;">87.5</span>
<div style="position:absolute;left:468px;top:992px;width:103px;height:48px;border-radius:10px;background:#1d2125"></div>
<svg class="ic" style="left:490.0px;top:998.0px" width="60.0" height="36.0" viewBox="-30 -18 60 36"><circle cx="0" cy="0" r="12" fill="none" stroke="#333a35" stroke-width="2.8"/><path d="M-14.8 -15.6 A21.5 21.5 0 0 0 -14.8 15.6 M14.8 -15.6 A21.5 21.5 0 0 1 14.8 15.6" fill="none" stroke="#3a4043" stroke-width="3.4" stroke-linecap="round"/><path d="M-27.9 -9.4 A29.5 29.5 0 0 0 -27.9 9.4" fill="none" stroke="#363a2a" stroke-width="3" stroke-linecap="round"/><path d="M27.9 -9.4 A29.5 29.5 0 0 1 27.9 9.4" fill="none" stroke="#2d3b31" stroke-width="3" stroke-linecap="round"/></svg>
<span class="t" id="t80" style="left:503.8px;top:1011.2px;font-size:13.5px;color:#ffffff;font-weight:400;font-family:'Liberation Mono', monospace;transform:scaleX(1.0030);-webkit-text-stroke:0.35px #ffffff;">87.5</span>
<div style="position:absolute;left:585.5px;top:992px;width:103px;height:48px;border-radius:10px;background:#1d2125"></div>
<svg class="ic" style="left:607.5px;top:998.0px" width="60.0" height="36.0" viewBox="-30 -18 60 36"><circle cx="0" cy="0" r="12" fill="none" stroke="#333a35" stroke-width="2.8"/><path d="M-14.8 -15.6 A21.5 21.5 0 0 0 -14.8 15.6 M14.8 -15.6 A21.5 21.5 0 0 1 14.8 15.6" fill="none" stroke="#3a4043" stroke-width="3.4" stroke-linecap="round"/><path d="M-27.9 -9.4 A29.5 29.5 0 0 0 -27.9 9.4" fill="none" stroke="#363a2a" stroke-width="3" stroke-linecap="round"/><path d="M27.9 -9.4 A29.5 29.5 0 0 1 27.9 9.4" fill="none" stroke="#2d3b31" stroke-width="3" stroke-linecap="round"/></svg>
<span class="t" id="t81" style="left:621.3px;top:1011.2px;font-size:13.5px;color:#ffffff;font-weight:400;font-family:'Liberation Mono', monospace;transform:scaleX(1.0030);-webkit-text-stroke:0.35px #ffffff;">87.5</span>
<div style="position:absolute;left:702.8px;top:992px;width:103px;height:48px;border-radius:10px;background:#1d2125"></div>
<svg class="ic" style="left:724.8px;top:998.0px" width="60.0" height="36.0" viewBox="-30 -18 60 36"><circle cx="0" cy="0" r="12" fill="none" stroke="#333a35" stroke-width="2.8"/><path d="M-14.8 -15.6 A21.5 21.5 0 0 0 -14.8 15.6 M14.8 -15.6 A21.5 21.5 0 0 1 14.8 15.6" fill="none" stroke="#3a4043" stroke-width="3.4" stroke-linecap="round"/><path d="M-27.9 -9.4 A29.5 29.5 0 0 0 -27.9 9.4" fill="none" stroke="#363a2a" stroke-width="3" stroke-linecap="round"/><path d="M27.9 -9.4 A29.5 29.5 0 0 1 27.9 9.4" fill="none" stroke="#2d3b31" stroke-width="3" stroke-linecap="round"/></svg>
<span class="t" id="t82" style="left:738.6px;top:1011.2px;font-size:13.5px;color:#ffffff;font-weight:400;font-family:'Liberation Mono', monospace;transform:scaleX(1.0030);-webkit-text-stroke:0.35px #ffffff;">87.5</span>
<div style="position:absolute;left:820px;top:992px;width:103px;height:48px;border-radius:10px;background:#1d2125"></div>
<svg class="ic" style="left:842.0px;top:998.0px" width="60.0" height="36.0" viewBox="-30 -18 60 36"><circle cx="0" cy="0" r="12" fill="none" stroke="#333a35" stroke-width="2.8"/><path d="M-14.8 -15.6 A21.5 21.5 0 0 0 -14.8 15.6 M14.8 -15.6 A21.5 21.5 0 0 1 14.8 15.6" fill="none" stroke="#3a4043" stroke-width="3.4" stroke-linecap="round"/><path d="M-27.9 -9.4 A29.5 29.5 0 0 0 -27.9 9.4" fill="none" stroke="#363a2a" stroke-width="3" stroke-linecap="round"/><path d="M27.9 -9.4 A29.5 29.5 0 0 1 27.9 9.4" fill="none" stroke="#2d3b31" stroke-width="3" stroke-linecap="round"/></svg>
<span class="t" id="t83" style="left:855.8px;top:1011.2px;font-size:13.5px;color:#ffffff;font-weight:400;font-family:'Liberation Mono', monospace;transform:scaleX(1.0030);-webkit-text-stroke:0.35px #ffffff;">87.5</span>
<div style="position:absolute;left:937.5px;top:992px;width:103px;height:48px;border-radius:10px;background:#1d2125"></div>
<svg class="ic" style="left:959.5px;top:998.0px" width="60.0" height="36.0" viewBox="-30 -18 60 36"><circle cx="0" cy="0" r="12" fill="none" stroke="#333a35" stroke-width="2.8"/><path d="M-14.8 -15.6 A21.5 21.5 0 0 0 -14.8 15.6 M14.8 -15.6 A21.5 21.5 0 0 1 14.8 15.6" fill="none" stroke="#3a4043" stroke-width="3.4" stroke-linecap="round"/><path d="M-27.9 -9.4 A29.5 29.5 0 0 0 -27.9 9.4" fill="none" stroke="#363a2a" stroke-width="3" stroke-linecap="round"/><path d="M27.9 -9.4 A29.5 29.5 0 0 1 27.9 9.4" fill="none" stroke="#2d3b31" stroke-width="3" stroke-linecap="round"/></svg>
<span class="t" id="t84" style="left:973.3px;top:1011.2px;font-size:13.5px;color:#ffffff;font-weight:400;font-family:'Liberation Mono', monospace;transform:scaleX(1.0030);-webkit-text-stroke:0.35px #ffffff;">87.5</span>
<div style="position:absolute;left:1055px;top:992px;width:103px;height:48px;border-radius:10px;background:#1d2125"></div>
<svg class="ic" style="left:1077.0px;top:998.0px" width="60.0" height="36.0" viewBox="-30 -18 60 36"><circle cx="0" cy="0" r="12" fill="none" stroke="#333a35" stroke-width="2.8"/><path d="M-14.8 -15.6 A21.5 21.5 0 0 0 -14.8 15.6 M14.8 -15.6 A21.5 21.5 0 0 1 14.8 15.6" fill="none" stroke="#3a4043" stroke-width="3.4" stroke-linecap="round"/><path d="M-27.9 -9.4 A29.5 29.5 0 0 0 -27.9 9.4" fill="none" stroke="#363a2a" stroke-width="3" stroke-linecap="round"/><path d="M27.9 -9.4 A29.5 29.5 0 0 1 27.9 9.4" fill="none" stroke="#2d3b31" stroke-width="3" stroke-linecap="round"/></svg>
<span class="t" id="t85" style="left:1090.8px;top:1011.2px;font-size:13.5px;color:#ffffff;font-weight:400;font-family:'Liberation Mono', monospace;transform:scaleX(1.0030);-webkit-text-stroke:0.35px #ffffff;">87.5</span>
<div style="position:absolute;left:0;top:803px;width:105px;height:49px;border-radius:0 0 12px 12px;background:#54b892"></div>
<span class="t" id="t86" style="left:8.3px;top:822.0px;font-size:12.6px;color:#1c3d32;font-weight:400;font-family:'Liberation Sans', sans-serif;transform:scaleX(1.0471);">North-East</span>
<svg class="ic" style="left:85px;top:822px" width="12" height="10" viewBox="0 0 12 10"><path d="M2 7.5 L6 3.5 L10 7.5" fill="none" stroke="#1c3d32" stroke-width="1.6"/></svg>
<div style="position:absolute;left:0;top:726px;width:105px;height:39px;background:#54b892"></div>
<div style="position:absolute;left:0;top:765px;width:104px;height:38px;background:#202327"></div>
<span class="t" id="t87" style="left:14.0px;top:739.0px;font-size:15.4px;color:#173a2e;font-weight:400;font-family:'Liberation Sans', sans-serif;transform:scaleX(1.0207);">North-East</span>
<span class="t" id="t88" style="left:13.6px;top:776.8px;font-size:15.4px;color:#a8cfc0;font-weight:400;font-family:'Liberation Sans', sans-serif;transform:scaleX(1.0057);">South-East</span>
<svg class="ic" style="left:0;top:0" width="1163" height="1066" viewBox="0 0 1163 1066"><line x1="364.9" y1="170.7" x2="280" y2="68" stroke="#e3161e" stroke-width="3" stroke-linecap="round"/><path d="M272.2 59.1 L286.3 66.3 L277.8 73.6 Z" fill="#e3161e"/><line x1="152.9" y1="572.2" x2="77" y2="732" stroke="#e3161e" stroke-width="3" stroke-linecap="round"/><path d="M72.2 743 L71.5 726.5 L83.5 732 Z" fill="#e3161e"/></svg>
<svg class="ic" style="left:1064px;top:1024px" width="90" height="33" viewBox="0 0 90 33"><defs><linearGradient id="tvg" x1="0" y1="0" x2="1" y2="1"><stop offset="0" stop-color="#3a86d6"/><stop offset="0.3" stop-color="#4cc060"/><stop offset="0.55" stop-color="#f2d21e"/><stop offset="0.8" stop-color="#e8302a"/><stop offset="1" stop-color="#c01828"/></linearGradient></defs><rect x="1.2" y="0.8" width="88" height="30.7" fill="#141414" stroke="#c8c8c8" stroke-width="1.3"/><line x1="77.5" y1="0.8" x2="77.5" y2="31.5" stroke="#c8c8c8" stroke-width="1"/><rect x="48" y="6.6" width="28" height="23.3" rx="1.5" fill="url(#tvg)"/><path d="M55 6.6 L50 2 M66 6.6 L73 2" stroke="#888" stroke-width="0.8"/><text x="6.5" y="24.6" font-family="Liberation Sans" font-weight="700" font-size="18.5" fill="#ffffff" textLength="38" lengthAdjust="spacingAndGlyphs">PRO</text><text x="50.5" y="26" font-family="Liberation Sans" font-weight="700" font-size="20" fill="#ffffff" textLength="23" lengthAdjust="spacingAndGlyphs">TV</text><text x="0" y="0" transform="translate(86.3 29) rotate(-90)" font-family="Liberation Sans" font-weight="700" font-size="7.5" fill="#ffffff" textLength="25" lengthAdjust="spacingAndGlyphs">NET.UA</text></svg>
</body></html>
